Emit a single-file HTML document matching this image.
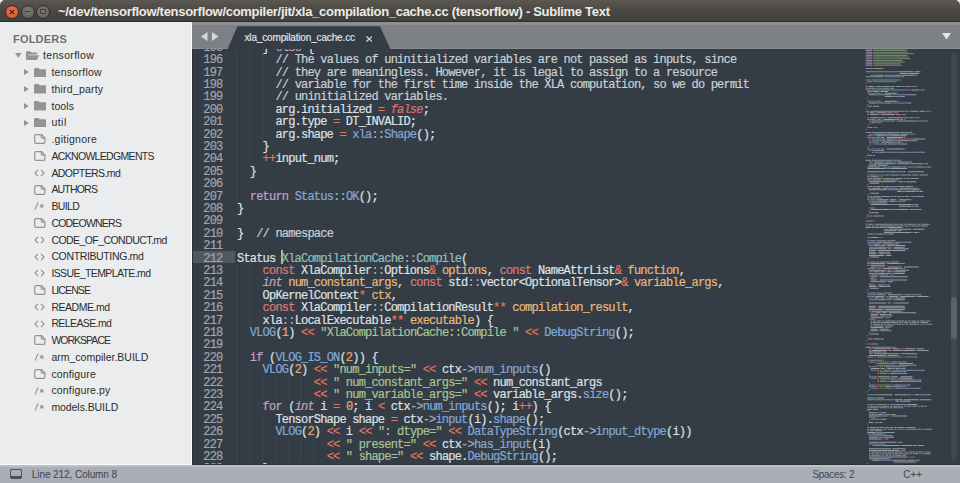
<!DOCTYPE html><html><head><meta charset="utf-8"><style>
*{margin:0;padding:0;box-sizing:border-box}
html,body{width:960px;height:483px;overflow:hidden;background:#3c3b37}
body{position:relative;font-family:"Liberation Sans", sans-serif}
.a{position:absolute;white-space:pre}
#title{left:0;top:0;width:960px;height:22px;background:linear-gradient(#5b5852,#4a4844 50%,#403f3b);}
#sidebar{left:0;top:22px;width:192px;height:443px;background:#ebecee;overflow:hidden}
#tabbar{left:192px;top:22px;width:768px;height:27px;background:#7d8084;overflow:hidden}
#code{left:192px;top:49px;width:768px;height:416px;background:#343c45;overflow:hidden}
#status{left:0;top:465px;width:960px;height:18px;background:#aaafb7}
.ln{position:absolute;left:0;width:30.5px;text-align:right;font-family:"Liberation Mono", monospace;font-size:12px;letter-spacing:-0.8px;-webkit-text-stroke:0.2px currentColor;color:#a0a6ad;line-height:12.4px;height:12.4px}
.cl{position:absolute;left:45px;font-family:"Liberation Mono", monospace;font-size:12px;letter-spacing:-0.8px;-webkit-text-stroke:0.2px currentColor;color:#dde1e6;line-height:12.4px;height:12.4px;white-space:pre}
.sb{position:absolute;font-size:10.5px;color:#2c2c2c;line-height:14px;height:14px;white-space:pre}

.d{color:#a9b0b8}.k{color:#de7a76}.s{color:#a7c593}.t{color:#82a9d6}.f{color:#82a9d6}.n{color:#e9a85f}.o{color:#e57556}
.p{color:#e8b87d}.r{color:#c7a0c8}.i{font-style:italic}.c{color:#cad0d6}.cy{color:#8fc0bd}.fl{color:#e06c70;font-style:italic}

</style></head><body>
<div id="title" class="a">
<div class="a" style="left:0;top:21px;width:960px;height:1px;background:#2e2d2a"></div>
<svg class="a" style="left:0;top:0" width="960" height="6"><path d="M0 0H5A5 5 0 0 0 0 5Z" fill="#f4f4f4"/><path d="M960 0H955A5 5 0 0 1 960 5Z" fill="#f4f4f4"/></svg>
<div class="a" style="left:5.199999999999999px;top:4.5px;width:14px;height:14px;border-radius:50%;background:radial-gradient(circle at 50% 40%,#f0734a,#d9502a);border:1px solid #2f2e2b"><svg class="a" style="left:0;top:0" width="12" height="12" viewBox="0 0 12 12"><path d="M3.8 3.8L8.2 8.2M8.2 3.8L3.8 8.2" stroke="#3a1a10" stroke-width="1.05"/></svg></div>
<div class="a" style="left:20.5px;top:4.5px;width:14px;height:14px;border-radius:50%;background:radial-gradient(circle at 50% 40%,#7a7975,#5d5c58);border:1px solid #2f2e2b"><div class="a" style="left:3.5px;top:5.4px;width:5px;height:1px;background:#3b3a36"></div></div>
<div class="a" style="left:36px;top:4.5px;width:14px;height:14px;border-radius:50%;background:radial-gradient(circle at 50% 40%,#7a7975,#5d5c58);border:1px solid #2f2e2b"><div class="a" style="left:3.3px;top:3.3px;width:5.4px;height:5.4px;border:1px solid #3b3a36;border-radius:1px"></div></div>
<div id="ttl" class="a" style="left:58px;top:4px;font-size:13px;font-weight:bold;color:#eeebe4;letter-spacing:-0.291px;line-height:15px">~/dev/tensorflow/tensorflow/compiler/jit/xla_compilation_cache.cc (tensorflow) - Sublime Text</div>
</div>
<div id="sidebar" class="a">
<div id="fld" class="a" style="left:13px;top:10px;font-size:11px;font-weight:bold;color:#707070;letter-spacing:0.206px;line-height:14px">FOLDERS</div>
<div id="sb0" class="sb" style="left:43.1px;top:26.26px;letter-spacing:0.309px">tensorflow</div>
<svg class="a" style="left:15px;top:31.00px" width="7" height="5" viewBox="0 0 7 5"><path d="M0 0H6.6L3.3 4.8Z" fill="#939393"/></svg>
<svg class="a" style="left:25px;top:28.80px" width="14.5" height="9.6" viewBox="0 0 14.5 9.6"><path d="M1 9.4V1.2Q1 .3 2 .3H5.2L6.4 1.6H11.5Q12.3 1.6 12.3 2.5V3.4H4L1 9.4Z" fill="#939393"/><path d="M3.6 4.2H14.2L11.6 9.5H1Z" fill="#939393"/></svg>
<div id="sb1" class="sb" style="left:51.4px;top:43.01px;letter-spacing:0.270px">tensorflow</div>
<svg class="a" style="left:23.8px;top:47.25px" width="5" height="6" viewBox="0 0 5 6"><path d="M0 0V6L4.8 3Z" fill="#939393"/></svg>
<svg class="a" style="left:33.6px;top:45.55px" width="12.4" height="9.5" viewBox="0 0 12.4 9.5"><path d="M0 1Q0 0 1 0H4.5L5.6 1.2H11.4Q12.4 1.2 12.4 2.2V8.5Q12.4 9.5 11.4 9.5H1Q0 9.5 0 8.5Z" fill="#939393"/></svg>
<div id="sb2" class="sb" style="left:51.4px;top:59.76px;letter-spacing:0.208px">third_party</div>
<svg class="a" style="left:23.8px;top:64.00px" width="5" height="6" viewBox="0 0 5 6"><path d="M0 0V6L4.8 3Z" fill="#939393"/></svg>
<svg class="a" style="left:33.6px;top:62.30px" width="12.4" height="9.5" viewBox="0 0 12.4 9.5"><path d="M0 1Q0 0 1 0H4.5L5.6 1.2H11.4Q12.4 1.2 12.4 2.2V8.5Q12.4 9.5 11.4 9.5H1Q0 9.5 0 8.5Z" fill="#939393"/></svg>
<div id="sb3" class="sb" style="left:51.4px;top:76.51px;letter-spacing:0.104px">tools</div>
<svg class="a" style="left:23.8px;top:80.75px" width="5" height="6" viewBox="0 0 5 6"><path d="M0 0V6L4.8 3Z" fill="#939393"/></svg>
<svg class="a" style="left:33.6px;top:79.05px" width="12.4" height="9.5" viewBox="0 0 12.4 9.5"><path d="M0 1Q0 0 1 0H4.5L5.6 1.2H11.4Q12.4 1.2 12.4 2.2V8.5Q12.4 9.5 11.4 9.5H1Q0 9.5 0 8.5Z" fill="#939393"/></svg>
<div id="sb4" class="sb" style="left:51.4px;top:93.26px;letter-spacing:0.474px">util</div>
<svg class="a" style="left:23.8px;top:97.50px" width="5" height="6" viewBox="0 0 5 6"><path d="M0 0V6L4.8 3Z" fill="#939393"/></svg>
<svg class="a" style="left:33.6px;top:95.80px" width="12.4" height="9.5" viewBox="0 0 12.4 9.5"><path d="M0 1Q0 0 1 0H4.5L5.6 1.2H11.4Q12.4 1.2 12.4 2.2V8.5Q12.4 9.5 11.4 9.5H1Q0 9.5 0 8.5Z" fill="#939393"/></svg>
<div id="sb5" class="sb" style="left:51.4px;top:110.01px;letter-spacing:0.255px">.gitignore</div>
<svg class="a" style="left:34px;top:112.25px" width="12" height="10" viewBox="0 0 12 10"><path d="M1.9 .7H7.6L10.9 3.9V8Q10.9 9.3 9.6 9.3H1.9Q.7 9.3 .7 8V2Q.7 .7 1.9 .7Z M7.3 .9V3.2Q7.3 4.2 8.3 4.2H10.8" fill="none" stroke="#939393" stroke-width="1.2"/></svg>
<div id="sb6" class="sb" style="left:51.4px;top:126.76px;letter-spacing:-0.671px">ACKNOWLEDGMENTS</div>
<svg class="a" style="left:34px;top:129.00px" width="12" height="10" viewBox="0 0 12 10"><path d="M1.9 .7H7.6L10.9 3.9V8Q10.9 9.3 9.6 9.3H1.9Q.7 9.3 .7 8V2Q.7 .7 1.9 .7Z M7.3 .9V3.2Q7.3 4.2 8.3 4.2H10.8" fill="none" stroke="#939393" stroke-width="1.2"/></svg>
<div id="sb7" class="sb" style="left:51.4px;top:143.51px;letter-spacing:-0.587px">ADOPTERS.md</div>
<svg class="a" style="left:34px;top:146.75px" width="11" height="8" viewBox="0 0 11 8"><path d="M4 .8L1 4L4 7.2M7 .8L10 4L7 7.2" fill="none" stroke="#939393" stroke-width="1.2"/></svg>
<div id="sb8" class="sb" style="left:51.4px;top:160.26px;letter-spacing:-0.806px">AUTHORS</div>
<svg class="a" style="left:34px;top:162.50px" width="12" height="10" viewBox="0 0 12 10"><path d="M1.9 .7H7.6L10.9 3.9V8Q10.9 9.3 9.6 9.3H1.9Q.7 9.3 .7 8V2Q.7 .7 1.9 .7Z M7.3 .9V3.2Q7.3 4.2 8.3 4.2H10.8" fill="none" stroke="#939393" stroke-width="1.2"/></svg>
<div id="sb9" class="sb" style="left:51.4px;top:177.01px;letter-spacing:-0.634px">BUILD</div>
<svg class="a" style="left:34px;top:180.25px" width="11" height="8" viewBox="0 0 11 8"><path d="M4.2 .5L1 7.5" fill="none" stroke="#939393" stroke-width="1.1"/><path d="M7.8 1.8V6.2M5.9 2.9L9.7 5.1M5.9 5.1L9.7 2.9" fill="none" stroke="#939393" stroke-width="1"/></svg>
<div id="sb10" class="sb" style="left:51.4px;top:193.76px;letter-spacing:-0.788px">CODEOWNERS</div>
<svg class="a" style="left:34px;top:196.00px" width="12" height="10" viewBox="0 0 12 10"><path d="M1.9 .7H7.6L10.9 3.9V8Q10.9 9.3 9.6 9.3H1.9Q.7 9.3 .7 8V2Q.7 .7 1.9 .7Z M7.3 .9V3.2Q7.3 4.2 8.3 4.2H10.8" fill="none" stroke="#939393" stroke-width="1.2"/></svg>
<div id="sb11" class="sb" style="left:51.4px;top:210.51px;letter-spacing:-0.562px">CODE_OF_CONDUCT.md</div>
<svg class="a" style="left:34px;top:213.75px" width="11" height="8" viewBox="0 0 11 8"><path d="M4 .8L1 4L4 7.2M7 .8L10 4L7 7.2" fill="none" stroke="#939393" stroke-width="1.2"/></svg>
<div id="sb12" class="sb" style="left:51.4px;top:227.26px;letter-spacing:-0.363px">CONTRIBUTING.md</div>
<svg class="a" style="left:34px;top:230.50px" width="11" height="8" viewBox="0 0 11 8"><path d="M4 .8L1 4L4 7.2M7 .8L10 4L7 7.2" fill="none" stroke="#939393" stroke-width="1.2"/></svg>
<div id="sb13" class="sb" style="left:51.4px;top:244.01px;letter-spacing:-0.620px">ISSUE_TEMPLATE.md</div>
<svg class="a" style="left:34px;top:247.25px" width="11" height="8" viewBox="0 0 11 8"><path d="M4 .8L1 4L4 7.2M7 .8L10 4L7 7.2" fill="none" stroke="#939393" stroke-width="1.2"/></svg>
<div id="sb14" class="sb" style="left:51.4px;top:260.76px;letter-spacing:-0.890px">LICENSE</div>
<svg class="a" style="left:34px;top:263.00px" width="12" height="10" viewBox="0 0 12 10"><path d="M1.9 .7H7.6L10.9 3.9V8Q10.9 9.3 9.6 9.3H1.9Q.7 9.3 .7 8V2Q.7 .7 1.9 .7Z M7.3 .9V3.2Q7.3 4.2 8.3 4.2H10.8" fill="none" stroke="#939393" stroke-width="1.2"/></svg>
<div id="sb15" class="sb" style="left:51.4px;top:277.51px;letter-spacing:-0.478px">README.md</div>
<svg class="a" style="left:34px;top:280.75px" width="11" height="8" viewBox="0 0 11 8"><path d="M4 .8L1 4L4 7.2M7 .8L10 4L7 7.2" fill="none" stroke="#939393" stroke-width="1.2"/></svg>
<div id="sb16" class="sb" style="left:51.4px;top:294.26px;letter-spacing:-0.606px">RELEASE.md</div>
<svg class="a" style="left:34px;top:297.50px" width="11" height="8" viewBox="0 0 11 8"><path d="M4 .8L1 4L4 7.2M7 .8L10 4L7 7.2" fill="none" stroke="#939393" stroke-width="1.2"/></svg>
<div id="sb17" class="sb" style="left:51.4px;top:311.01px;letter-spacing:-0.987px">WORKSPACE</div>
<svg class="a" style="left:34px;top:313.25px" width="12" height="10" viewBox="0 0 12 10"><path d="M1.9 .7H7.6L10.9 3.9V8Q10.9 9.3 9.6 9.3H1.9Q.7 9.3 .7 8V2Q.7 .7 1.9 .7Z M7.3 .9V3.2Q7.3 4.2 8.3 4.2H10.8" fill="none" stroke="#939393" stroke-width="1.2"/></svg>
<div id="sb18" class="sb" style="left:51.4px;top:327.76px;letter-spacing:0.002px">arm_compiler.BUILD</div>
<svg class="a" style="left:34px;top:331.00px" width="11" height="8" viewBox="0 0 11 8"><path d="M4.2 .5L1 7.5" fill="none" stroke="#939393" stroke-width="1.1"/><path d="M7.8 1.8V6.2M5.9 2.9L9.7 5.1M5.9 5.1L9.7 2.9" fill="none" stroke="#939393" stroke-width="1"/></svg>
<div id="sb19" class="sb" style="left:51.4px;top:344.51px;letter-spacing:0.149px">configure</div>
<svg class="a" style="left:34px;top:346.75px" width="12" height="10" viewBox="0 0 12 10"><path d="M1.9 .7H7.6L10.9 3.9V8Q10.9 9.3 9.6 9.3H1.9Q.7 9.3 .7 8V2Q.7 .7 1.9 .7Z M7.3 .9V3.2Q7.3 4.2 8.3 4.2H10.8" fill="none" stroke="#939393" stroke-width="1.2"/></svg>
<div id="sb20" class="sb" style="left:51.4px;top:361.26px;letter-spacing:0.162px">configure.py</div>
<svg class="a" style="left:34px;top:364.50px" width="11" height="8" viewBox="0 0 11 8"><path d="M4.2 .5L1 7.5" fill="none" stroke="#939393" stroke-width="1.1"/><path d="M7.8 1.8V6.2M5.9 2.9L9.7 5.1M5.9 5.1L9.7 2.9" fill="none" stroke="#939393" stroke-width="1"/></svg>
<div id="sb21" class="sb" style="left:51.4px;top:378.01px;letter-spacing:-0.072px">models.BUILD</div>
<svg class="a" style="left:34px;top:381.25px" width="11" height="8" viewBox="0 0 11 8"><path d="M4.2 .5L1 7.5" fill="none" stroke="#939393" stroke-width="1.1"/><path d="M7.8 1.8V6.2M5.9 2.9L9.7 5.1M5.9 5.1L9.7 2.9" fill="none" stroke="#939393" stroke-width="1"/></svg>
<div class="a" style="left:191px;top:0;width:1px;height:443px;background:#fbfbfb"></div>
<div class="a" style="left:0;top:442px;width:192px;height:1px;background:#fbfbfb"></div>
</div>
<div id="tabbar" class="a">
<div class="a" style="left:0;top:0;width:768px;height:2.5px;background:#8c8f93"></div>
<div class="a" style="left:0;top:25.5px;width:768px;height:1.5px;background:#898c91"></div>
<svg class="a" style="left:9px;top:9.8px" width="7" height="9" viewBox="0 0 7 9"><path d="M6.5 0V9L0 4.5Z" fill="#d4d6d9"/></svg>
<svg class="a" style="left:19.7px;top:9.8px" width="7" height="9" viewBox="0 0 7 9"><path d="M0 0V9L6.5 4.5Z" fill="#d4d6d9"/></svg>
<svg class="a" style="left:0;top:0" width="768" height="27" viewBox="0 0 768 27"><path d="M35.5 27L45.5 4.3H188L198.4 27Z" fill="#343c45"/></svg>
<div id="tab" class="a" style="left:52.5px;top:8.9px;font-size:10px;color:#e6e8ea;-webkit-text-stroke:0.15px #e6e8ea;letter-spacing:-0.150px;line-height:13px">xla_compilation_cache.cc</div>
<svg class="a" style="left:173.8px;top:13.5px" width="6.5" height="6" viewBox="0 0 6.5 6"><path d="M.5 .5L6 5.5M6 .5L.5 5.5" stroke="#d6d9dc" stroke-width="1.2"/></svg>
<svg class="a" style="left:750px;top:10.5px" width="9" height="7" viewBox="0 0 9 7"><path d="M0 0H9L4.5 6.5Z" fill="#e4e6e8"/></svg>
</div>
<div id="code" class="a">
<div class="a" style="left:0;top:0;width:1px;height:416px;background:#2c3238"></div>
<div class="a" style="left:0.5px;top:202.10px;width:42.7px;height:12.3px;background:#4f5962"></div>
<div class="ln" style="top:-7.30px">195</div>
<div class="cl" style="top:-7.30px">    } <span class="r">else</span> {</div>
<div class="ln" style="top:5.10px">196</div>
<div class="cl" style="top:5.10px">      <span class="c">// The values of uninitialized variables are not passed as inputs, since</span></div>
<div class="ln" style="top:17.50px">197</div>
<div class="cl" style="top:17.50px">      <span class="c">// they are meaningless. However, it is legal to assign to a resource</span></div>
<div class="ln" style="top:29.90px">198</div>
<div class="cl" style="top:29.90px">      <span class="c">// variable for the first time inside the XLA computation, so we do permit</span></div>
<div class="ln" style="top:42.30px">199</div>
<div class="cl" style="top:42.30px">      <span class="c">// uninitialized variables.</span></div>
<div class="ln" style="top:54.70px">200</div>
<div class="cl" style="top:54.70px">      arg.initialized <span class="o">=</span> <span class="fl">false</span>;</div>
<div class="ln" style="top:67.10px">201</div>
<div class="cl" style="top:67.10px">      arg.type <span class="o">=</span> DT_INVALID;</div>
<div class="ln" style="top:79.50px">202</div>
<div class="cl" style="top:79.50px">      arg.shape <span class="o">=</span> <span class="t">xla</span><span class="d">::</span><span class="t">Shape</span>();</div>
<div class="ln" style="top:91.90px">203</div>
<div class="cl" style="top:91.90px">    }</div>
<div class="ln" style="top:104.30px">204</div>
<div class="cl" style="top:104.30px">    <span class="o">++</span>input_num;</div>
<div class="ln" style="top:116.70px">205</div>
<div class="cl" style="top:116.70px">  }</div>
<div class="ln" style="top:129.10px">206</div>
<div class="cl" style="top:129.10px"></div>
<div class="ln" style="top:141.50px">207</div>
<div class="cl" style="top:141.50px">  <span class="r">return</span> <span class="t">Status</span><span class="d">::</span><span class="t">OK</span>();</div>
<div class="ln" style="top:153.90px">208</div>
<div class="cl" style="top:153.90px">}</div>
<div class="ln" style="top:166.30px">209</div>
<div class="cl" style="top:166.30px"></div>
<div class="ln" style="top:178.70px">210</div>
<div class="cl" style="top:178.70px">}  <span class="c">// namespace</span></div>
<div class="ln" style="top:191.10px">211</div>
<div class="cl" style="top:191.10px"></div>
<div class="ln" style="top:203.50px">212</div>
<div class="cl" style="top:203.50px">Status <span class="cy">XlaCompilationCache</span><span class="d">::</span><span class="cy">Compile</span>(</div>
<div class="ln" style="top:215.90px">213</div>
<div class="cl" style="top:215.90px">    <span class="k">const</span> XlaCompiler<span class="d">::</span>Options<span class="o">&amp;</span> <span class="p">options</span>, <span class="k">const</span> NameAttrList<span class="o">&amp;</span> <span class="p">function</span>,</div>
<div class="ln" style="top:228.30px">214</div>
<div class="cl" style="top:228.30px">    <span class="r"><span class="i">int</span></span> <span class="p">num_constant_args</span>, <span class="k">const</span> std<span class="d">::</span>vector&lt;OptionalTensor&gt;<span class="o">&amp;</span> <span class="p">variable_args</span>,</div>
<div class="ln" style="top:240.70px">215</div>
<div class="cl" style="top:240.70px">    OpKernelContext<span class="o">*</span> <span class="p">ctx</span>,</div>
<div class="ln" style="top:253.10px">216</div>
<div class="cl" style="top:253.10px">    <span class="k">const</span> XlaCompiler<span class="d">::</span>CompilationResult<span class="o">**</span> <span class="p">compilation_result</span>,</div>
<div class="ln" style="top:265.50px">217</div>
<div class="cl" style="top:265.50px">    xla<span class="d">::</span>LocalExecutable<span class="o">**</span> <span class="p">executable</span>) {</div>
<div class="ln" style="top:277.90px">218</div>
<div class="cl" style="top:277.90px">  <span class="t">VLOG</span>(<span class="n">1</span>) <span class="o">&lt;&lt;</span> <span class="s">"XlaCompilationCache::Compile "</span> <span class="o">&lt;&lt;</span> <span class="t">DebugString</span>();</div>
<div class="ln" style="top:290.30px">219</div>
<div class="cl" style="top:290.30px"></div>
<div class="ln" style="top:302.70px">220</div>
<div class="cl" style="top:302.70px">  <span class="r">if</span> (<span class="t">VLOG_IS_ON</span>(<span class="n">2</span>)) {</div>
<div class="ln" style="top:315.10px">221</div>
<div class="cl" style="top:315.10px">    <span class="t">VLOG</span>(<span class="n">2</span>) <span class="o">&lt;&lt;</span> <span class="s">"num_inputs="</span> <span class="o">&lt;&lt;</span> ctx<span class="d">-&gt;</span><span class="t">num_inputs</span>()</div>
<div class="ln" style="top:327.50px">222</div>
<div class="cl" style="top:327.50px">            <span class="o">&lt;&lt;</span> <span class="s">" num_constant_args="</span> <span class="o">&lt;&lt;</span> num_constant_args</div>
<div class="ln" style="top:339.90px">223</div>
<div class="cl" style="top:339.90px">            <span class="o">&lt;&lt;</span> <span class="s">" num_variable_args="</span> <span class="o">&lt;&lt;</span> variable_args.<span class="t">size</span>();</div>
<div class="ln" style="top:352.30px">224</div>
<div class="cl" style="top:352.30px">    <span class="r">for</span> (<span class="r"><span class="i">int</span></span> i <span class="o">=</span> <span class="n">0</span>; i <span class="o">&lt;</span> ctx<span class="d">-&gt;</span><span class="t">num_inputs</span>(); i<span class="o">++</span>) {</div>
<div class="ln" style="top:364.70px">225</div>
<div class="cl" style="top:364.70px">      TensorShape shape <span class="o">=</span> ctx<span class="d">-&gt;</span><span class="t">input</span>(i).<span class="t">shape</span>();</div>
<div class="ln" style="top:377.10px">226</div>
<div class="cl" style="top:377.10px">      <span class="t">VLOG</span>(<span class="n">2</span>) <span class="o">&lt;&lt;</span> i <span class="o">&lt;&lt;</span> <span class="s">": dtype="</span> <span class="o">&lt;&lt;</span> <span class="t">DataTypeString</span>(ctx<span class="d">-&gt;</span><span class="t">input_dtype</span>(i))</div>
<div class="ln" style="top:389.50px">227</div>
<div class="cl" style="top:389.50px">              <span class="o">&lt;&lt;</span> <span class="s">" present="</span> <span class="o">&lt;&lt;</span> ctx<span class="d">-&gt;</span><span class="t">has_input</span>(i)</div>
<div class="ln" style="top:401.90px">228</div>
<div class="cl" style="top:401.90px">              <span class="o">&lt;&lt;</span> <span class="s">" shape="</span> <span class="o">&lt;&lt;</span> shape.<span class="t">DebugString</span>();</div>
<div class="ln" style="top:414.30px">229</div>
<div class="cl" style="top:414.30px">    }</div>
<svg class="a" style="left:0;top:0" width="768" height="416"><path d="M45.0 -8.10v12.4M57.8 -8.10v12.4M45.0 4.30v12.4M57.8 4.30v12.4M70.6 4.30v12.4M45.0 16.70v12.4M57.8 16.70v12.4M70.6 16.70v12.4M45.0 29.10v12.4M57.8 29.10v12.4M70.6 29.10v12.4M45.0 41.50v12.4M57.8 41.50v12.4M70.6 41.50v12.4M45.0 53.90v12.4M57.8 53.90v12.4M70.6 53.90v12.4M45.0 66.30v12.4M57.8 66.30v12.4M70.6 66.30v12.4M45.0 78.70v12.4M57.8 78.70v12.4M70.6 78.70v12.4M45.0 91.10v12.4M57.8 91.10v12.4M45.0 103.50v12.4M57.8 103.50v12.4M45.0 115.90v12.4M45.0 128.30v12.4M45.0 140.70v12.4M45.0 215.10v12.4M57.8 215.10v12.4M45.0 227.50v12.4M57.8 227.50v12.4M45.0 239.90v12.4M57.8 239.90v12.4M45.0 252.30v12.4M57.8 252.30v12.4M45.0 264.70v12.4M57.8 264.70v12.4M45.0 277.10v12.4M45.0 289.50v12.4M45.0 301.90v12.4M45.0 314.30v12.4M57.8 314.30v12.4M45.0 326.70v12.4M57.8 326.70v12.4M70.6 326.70v12.4M83.4 326.70v12.4M96.2 326.70v12.4M109.0 326.70v12.4M45.0 339.10v12.4M57.8 339.10v12.4M70.6 339.10v12.4M83.4 339.10v12.4M96.2 339.10v12.4M109.0 339.10v12.4M45.0 351.50v12.4M57.8 351.50v12.4M45.0 363.90v12.4M57.8 363.90v12.4M70.6 363.90v12.4M45.0 376.30v12.4M57.8 376.30v12.4M70.6 376.30v12.4M45.0 388.70v12.4M57.8 388.70v12.4M70.6 388.70v12.4M83.4 388.70v12.4M96.2 388.70v12.4M109.0 388.70v12.4M121.8 388.70v12.4M45.0 401.10v12.4M57.8 401.10v12.4M70.6 401.10v12.4M83.4 401.10v12.4M96.2 401.10v12.4M109.0 401.10v12.4M121.8 401.10v12.4M45.0 413.50v12.4M57.8 413.50v12.4" stroke="#3f4851" stroke-width="1" fill="none"/></svg>
<svg class="a" style="left:0;top:0" width="768" height="416" opacity="0.72"><path d="M673.7 -0.60h6.6v1.0h-6.6zM673.7 1.04h6.6v1.0h-6.6zM673.7 2.68h6.6v1.0h-6.6zM673.7 4.32h6.6v1.0h-6.6zM673.7 5.96h6.6v1.0h-6.6zM673.7 7.60h6.6v1.0h-6.6zM673.7 9.24h6.6v1.0h-6.6zM673.7 10.88h6.6v1.0h-6.6zM673.7 12.51h6.6v1.0h-6.6zM673.7 14.15h6.6v1.0h-6.6zM673.7 15.79h6.6v1.0h-6.6zM673.7 19.07h7.5v1.0h-7.5zM673.7 30.54h5.0v1.0h-5.0zM675.4 32.18h5.0v1.0h-5.0zM673.7 40.38h5.0v1.0h-5.0zM675.4 42.02h5.0v1.0h-5.0zM675.4 43.65h2.5v1.0h-2.5zM684.5 43.65h3.3v1.0h-3.3zM675.4 51.85h2.5v1.0h-2.5zM684.5 51.85h3.3v1.0h-3.3zM675.4 56.77h5.0v1.0h-5.0zM673.7 61.68h3.3v1.0h-3.3zM675.4 63.32h1.7v1.0h-1.7zM695.3 63.32h5.0v1.0h-5.0zM675.4 64.96h1.7v1.0h-1.7zM703.6 64.96h5.0v1.0h-5.0zM675.4 68.24h1.7v1.0h-1.7zM716.9 68.24h5.0v1.0h-5.0zM675.4 69.88h2.5v1.0h-2.5zM679.5 69.88h2.5v1.0h-2.5zM677.0 71.52h1.7v1.0h-1.7zM678.7 73.16h5.0v1.0h-5.0zM675.4 78.07h5.0v1.0h-5.0zM673.7 82.99h5.0v1.0h-5.0zM675.4 86.27h5.0v1.0h-5.0zM692.8 86.27h5.0v1.0h-5.0zM675.4 87.91h2.5v1.0h-2.5zM684.5 87.91h3.3v1.0h-3.3zM702.8 89.55h2.5v1.0h-2.5zM718.5 89.55h2.5v1.0h-2.5zM702.8 91.19h2.5v1.0h-2.5zM677.0 92.82h2.5v1.0h-2.5zM681.2 92.82h2.5v1.0h-2.5zM704.4 94.46h2.5v1.0h-2.5zM675.4 99.38h2.5v1.0h-2.5zM684.5 99.38h3.3v1.0h-3.3zM675.4 105.94h5.0v1.0h-5.0zM701.9 112.49h2.5v1.0h-2.5zM675.4 127.24h2.5v1.0h-2.5zM675.4 130.52h4.1v1.0h-4.1zM675.4 138.72h4.1v1.0h-4.1zM675.4 150.19h2.5v1.0h-2.5zM677.0 153.47h1.7v1.0h-1.7zM678.7 158.38h3.3v1.0h-3.3zM675.4 166.58h5.0v1.0h-5.0zM673.7 171.50h7.5v1.0h-7.5zM692.0 178.05h2.5v1.0h-2.5zM675.4 187.89h2.5v1.0h-2.5zM675.4 194.44h4.1v1.0h-4.1zM675.4 214.11h2.5v1.0h-2.5zM675.4 215.75h2.5v1.0h-2.5zM675.4 219.03h2.5v1.0h-2.5zM679.5 219.03h2.5v1.0h-2.5zM677.0 225.58h1.7v1.0h-1.7zM678.7 228.86h3.3v1.0h-3.3zM675.4 246.89h2.5v1.0h-2.5zM679.5 246.89h2.5v1.0h-2.5zM677.0 261.64h1.7v1.0h-1.7zM678.7 269.84h3.3v1.0h-3.3zM675.4 289.50h5.0v1.0h-5.0zM677.0 300.98h2.5v1.0h-2.5zM675.4 310.81h1.7v1.0h-1.7zM677.0 317.37h2.5v1.0h-2.5zM681.2 317.37h2.5v1.0h-2.5zM677.0 327.20h2.5v1.0h-2.5zM677.0 337.04h2.5v1.0h-2.5zM681.2 337.04h2.5v1.0h-2.5zM677.0 368.18h1.7v1.0h-1.7zM685.3 369.82h2.5v1.0h-2.5zM675.4 384.57h1.7v1.0h-1.7z" fill="#c39ac4"/><path d="M681.2 -0.60h34.0v1.0h-34.0zM681.2 1.04h33.2v1.0h-33.2zM681.2 2.68h34.9v1.0h-34.9zM681.2 4.32h40.7v1.0h-40.7zM681.2 5.96h34.0v1.0h-34.0zM681.2 7.60h35.7v1.0h-35.7zM681.2 9.24h37.4v1.0h-37.4zM681.2 10.88h29.0v1.0h-29.0zM681.2 12.51h31.5v1.0h-31.5zM681.2 14.15h27.4v1.0h-27.4zM681.2 15.79h28.2v1.0h-28.2zM681.2 32.18h22.4v1.0h-22.4zM700.3 45.29h2.5v1.0h-2.5zM700.3 53.49h3.3v1.0h-3.3zM684.5 307.53h25.7v1.0h-25.7zM686.2 312.45h10.8v1.0h-10.8zM686.2 314.09h17.4v1.0h-17.4zM686.2 315.73h17.4v1.0h-17.4zM692.0 320.65h8.3v1.0h-8.3zM687.8 322.28h9.1v1.0h-9.1zM687.8 323.92h7.5v1.0h-7.5zM687.8 328.84h15.8v1.0h-15.8zM687.8 330.48h6.6v1.0h-6.6zM687.8 332.12h7.5v1.0h-7.5zM686.2 335.40h13.3v1.0h-13.3zM692.0 338.68h8.3v1.0h-8.3zM684.5 355.06h10.8v1.0h-10.8z" fill="#88a57a"/><path d="M682.0 19.07h8.3v1.0h-8.3z" fill="#e3b47a"/><path d="M691.1 19.07h0.8v1.0h-0.8zM689.5 22.35h1.7v1.0h-1.7zM706.9 22.35h0.8v1.0h-0.8zM707.7 22.35h2.5v1.0h-2.5zM710.2 22.35h1.7v1.0h-1.7zM711.9 22.35h9.1v1.0h-9.1zM722.7 22.35h5.0v1.0h-5.0zM727.7 22.35h0.8v1.0h-0.8zM707.7 23.99h8.3v1.0h-8.3zM716.9 23.99h9.1v1.0h-9.1zM726.0 23.99h0.8v1.0h-0.8zM684.5 25.63h0.8v1.0h-0.8zM685.3 25.63h5.0v1.0h-5.0zM690.3 25.63h0.8v1.0h-0.8zM691.1 25.63h0.8v1.0h-0.8zM702.8 25.63h0.8v1.0h-0.8zM703.6 25.63h2.5v1.0h-2.5zM706.1 25.63h1.7v1.0h-1.7zM711.1 25.63h0.8v1.0h-0.8zM711.9 25.63h9.1v1.0h-9.1zM721.0 25.63h0.8v1.0h-0.8zM721.8 25.63h0.8v1.0h-0.8zM723.5 25.63h0.8v1.0h-0.8zM724.3 25.63h0.8v1.0h-0.8zM689.5 27.26h1.7v1.0h-1.7zM707.7 27.26h0.8v1.0h-0.8zM708.6 27.26h0.8v1.0h-0.8zM710.2 27.26h0.8v1.0h-0.8zM711.1 27.26h0.8v1.0h-0.8zM695.3 30.54h1.7v1.0h-1.7zM706.1 30.54h0.8v1.0h-0.8zM706.9 30.54h0.8v1.0h-0.8zM708.6 30.54h0.8v1.0h-0.8zM703.6 32.18h0.8v1.0h-0.8zM673.7 33.82h0.8v1.0h-0.8zM695.3 40.38h1.7v1.0h-1.7zM713.5 40.38h0.8v1.0h-0.8zM719.4 40.38h7.5v1.0h-7.5zM728.5 40.38h2.5v1.0h-2.5zM731.0 40.38h0.8v1.0h-0.8zM732.6 40.38h0.8v1.0h-0.8zM681.2 42.02h5.0v1.0h-5.0zM688.6 42.02h2.5v1.0h-2.5zM691.1 42.02h0.8v1.0h-0.8zM692.0 42.02h3.3v1.0h-3.3zM695.3 42.02h0.8v1.0h-0.8zM678.7 43.65h0.8v1.0h-0.8zM689.5 43.65h0.8v1.0h-0.8zM692.8 43.65h2.5v1.0h-2.5zM695.3 43.65h0.8v1.0h-0.8zM696.1 43.65h7.5v1.0h-7.5zM703.6 43.65h0.8v1.0h-0.8zM705.2 43.65h0.8v1.0h-0.8zM677.0 45.29h5.8v1.0h-5.8zM682.8 45.29h1.7v1.0h-1.7zM692.0 45.29h0.8v1.0h-0.8zM693.6 45.29h5.0v1.0h-5.0zM698.6 45.29h0.8v1.0h-0.8zM702.8 45.29h0.8v1.0h-0.8zM716.0 45.29h0.8v1.0h-0.8zM716.9 45.29h0.8v1.0h-0.8zM717.7 45.29h0.8v1.0h-0.8zM718.5 45.29h4.1v1.0h-4.1zM722.7 45.29h0.8v1.0h-0.8zM723.5 45.29h0.8v1.0h-0.8zM692.8 46.93h0.8v1.0h-0.8zM693.6 46.93h0.8v1.0h-0.8zM694.5 46.93h5.0v1.0h-5.0zM699.4 46.93h0.8v1.0h-0.8zM709.4 46.93h0.8v1.0h-0.8zM710.2 46.93h0.8v1.0h-0.8zM711.1 46.93h0.8v1.0h-0.8zM711.9 46.93h0.8v1.0h-0.8zM675.4 48.57h0.8v1.0h-0.8zM678.7 51.85h0.8v1.0h-0.8zM689.5 51.85h0.8v1.0h-0.8zM692.8 51.85h2.5v1.0h-2.5zM695.3 51.85h0.8v1.0h-0.8zM696.1 51.85h8.3v1.0h-8.3zM704.4 51.85h0.8v1.0h-0.8zM706.1 51.85h0.8v1.0h-0.8zM677.0 53.49h5.8v1.0h-5.8zM682.8 53.49h1.7v1.0h-1.7zM692.0 53.49h0.8v1.0h-0.8zM693.6 53.49h5.0v1.0h-5.0zM698.6 53.49h0.8v1.0h-0.8zM703.6 53.49h0.8v1.0h-0.8zM705.2 53.49h0.8v1.0h-0.8zM706.1 53.49h0.8v1.0h-0.8zM716.0 53.49h0.8v1.0h-0.8zM716.9 53.49h0.8v1.0h-0.8zM717.7 53.49h0.8v1.0h-0.8zM718.5 53.49h0.8v1.0h-0.8zM675.4 55.13h0.8v1.0h-0.8zM681.2 56.77h5.0v1.0h-5.0zM686.2 56.77h0.8v1.0h-0.8zM673.7 58.41h0.8v1.0h-0.8zM693.6 61.68h1.7v1.0h-1.7zM702.8 61.68h1.7v1.0h-1.7zM712.7 61.68h0.8v1.0h-0.8zM718.5 61.68h7.5v1.0h-7.5zM727.7 61.68h4.1v1.0h-4.1zM731.8 61.68h0.8v1.0h-0.8zM738.4 61.68h0.8v1.0h-0.8zM677.9 63.32h0.8v1.0h-0.8zM678.7 63.32h3.3v1.0h-3.3zM685.3 63.32h4.1v1.0h-4.1zM689.5 63.32h0.8v1.0h-0.8zM690.3 63.32h3.3v1.0h-3.3zM693.6 63.32h0.8v1.0h-0.8zM705.2 63.32h0.8v1.0h-0.8zM677.9 64.96h0.8v1.0h-0.8zM678.7 64.96h7.5v1.0h-7.5zM689.5 64.96h4.1v1.0h-4.1zM693.6 64.96h0.8v1.0h-0.8zM694.5 64.96h7.5v1.0h-7.5zM701.9 64.96h0.8v1.0h-0.8zM713.5 64.96h0.8v1.0h-0.8zM677.9 68.24h0.8v1.0h-0.8zM678.7 68.24h8.3v1.0h-8.3zM687.0 68.24h0.8v1.0h-0.8zM691.1 68.24h0.8v1.0h-0.8zM692.0 68.24h0.8v1.0h-0.8zM696.1 68.24h4.1v1.0h-4.1zM700.3 68.24h0.8v1.0h-0.8zM701.1 68.24h8.3v1.0h-8.3zM709.4 68.24h0.8v1.0h-0.8zM713.5 68.24h0.8v1.0h-0.8zM714.4 68.24h0.8v1.0h-0.8zM715.2 68.24h0.8v1.0h-0.8zM726.8 68.24h0.8v1.0h-0.8zM678.7 69.88h0.8v1.0h-0.8zM682.8 69.88h0.8v1.0h-0.8zM687.0 69.88h0.8v1.0h-0.8zM688.6 69.88h0.8v1.0h-0.8zM692.0 69.88h8.3v1.0h-8.3zM700.3 69.88h0.8v1.0h-0.8zM704.4 69.88h0.8v1.0h-0.8zM705.2 69.88h0.8v1.0h-0.8zM706.1 69.88h0.8v1.0h-0.8zM709.4 69.88h0.8v1.0h-0.8zM710.2 69.88h0.8v1.0h-0.8zM711.9 69.88h0.8v1.0h-0.8zM679.5 71.52h0.8v1.0h-0.8zM680.3 71.52h8.3v1.0h-8.3zM688.6 71.52h0.8v1.0h-0.8zM689.5 71.52h0.8v1.0h-0.8zM690.3 71.52h0.8v1.0h-0.8zM691.1 71.52h0.8v1.0h-0.8zM701.1 71.52h0.8v1.0h-0.8zM701.9 71.52h0.8v1.0h-0.8zM706.1 71.52h4.1v1.0h-4.1zM710.2 71.52h0.8v1.0h-0.8zM711.1 71.52h8.3v1.0h-8.3zM719.4 71.52h0.8v1.0h-0.8zM720.2 71.52h0.8v1.0h-0.8zM721.0 71.52h0.8v1.0h-0.8zM721.8 71.52h0.8v1.0h-0.8zM731.8 71.52h0.8v1.0h-0.8zM732.6 71.52h0.8v1.0h-0.8zM733.5 71.52h0.8v1.0h-0.8zM735.1 71.52h0.8v1.0h-0.8zM688.6 73.16h0.8v1.0h-0.8zM677.0 74.80h0.8v1.0h-0.8zM675.4 76.43h0.8v1.0h-0.8zM684.5 78.07h0.8v1.0h-0.8zM673.7 79.71h0.8v1.0h-0.8zM695.3 82.99h1.7v1.0h-1.7zM704.4 82.99h1.7v1.0h-1.7zM709.4 82.99h1.7v1.0h-1.7zM717.7 82.99h0.8v1.0h-0.8zM718.5 82.99h0.8v1.0h-0.8zM719.4 82.99h0.8v1.0h-0.8zM682.0 84.63h15.8v1.0h-15.8zM697.8 84.63h1.7v1.0h-1.7zM699.4 84.63h7.5v1.0h-7.5zM708.6 84.63h7.5v1.0h-7.5zM716.0 84.63h0.8v1.0h-0.8zM722.7 84.63h0.8v1.0h-0.8zM681.2 86.27h0.8v1.0h-0.8zM684.5 86.27h2.5v1.0h-2.5zM687.0 86.27h1.7v1.0h-1.7zM688.6 86.27h3.3v1.0h-3.3zM698.6 86.27h0.8v1.0h-0.8zM699.4 86.27h0.8v1.0h-0.8zM700.3 86.27h0.8v1.0h-0.8zM701.1 86.27h7.5v1.0h-7.5zM708.6 86.27h0.8v1.0h-0.8zM709.4 86.27h3.3v1.0h-3.3zM712.7 86.27h0.8v1.0h-0.8zM713.5 86.27h0.8v1.0h-0.8zM678.7 87.91h0.8v1.0h-0.8zM689.5 87.91h2.5v1.0h-2.5zM694.5 87.91h7.5v1.0h-7.5zM701.9 87.91h0.8v1.0h-0.8zM702.8 87.91h7.5v1.0h-7.5zM710.2 87.91h0.8v1.0h-0.8zM711.9 87.91h0.8v1.0h-0.8zM677.0 89.55h0.8v1.0h-0.8zM691.1 89.55h0.8v1.0h-0.8zM692.0 89.55h0.8v1.0h-0.8zM692.8 89.55h0.8v1.0h-0.8zM694.5 89.55h2.5v1.0h-2.5zM696.9 89.55h1.7v1.0h-1.7zM698.6 89.55h3.3v1.0h-3.3zM706.1 89.55h0.8v1.0h-0.8zM706.9 89.55h0.8v1.0h-0.8zM707.7 89.55h0.8v1.0h-0.8zM721.8 89.55h0.8v1.0h-0.8zM722.7 89.55h2.5v1.0h-2.5zM725.2 89.55h0.8v1.0h-0.8zM726.0 89.55h4.1v1.0h-4.1zM730.1 89.55h0.8v1.0h-0.8zM731.0 89.55h0.8v1.0h-0.8zM731.8 89.55h0.8v1.0h-0.8zM732.6 89.55h0.8v1.0h-0.8zM677.0 91.19h0.8v1.0h-0.8zM691.1 91.19h0.8v1.0h-0.8zM692.0 91.19h0.8v1.0h-0.8zM692.8 91.19h0.8v1.0h-0.8zM694.5 91.19h2.5v1.0h-2.5zM696.9 91.19h1.7v1.0h-1.7zM698.6 91.19h3.3v1.0h-3.3zM706.1 91.19h0.8v1.0h-0.8zM706.9 91.19h0.8v1.0h-0.8zM707.7 91.19h0.8v1.0h-0.8zM708.6 91.19h2.5v1.0h-2.5zM711.1 91.19h0.8v1.0h-0.8zM711.9 91.19h5.0v1.0h-5.0zM716.9 91.19h0.8v1.0h-0.8zM721.0 91.19h0.8v1.0h-0.8zM721.8 91.19h0.8v1.0h-0.8zM722.7 91.19h0.8v1.0h-0.8zM723.5 91.19h0.8v1.0h-0.8zM724.3 91.19h0.8v1.0h-0.8zM680.3 92.82h0.8v1.0h-0.8zM684.5 92.82h2.5v1.0h-2.5zM689.5 92.82h2.5v1.0h-2.5zM692.0 92.82h0.8v1.0h-0.8zM692.8 92.82h5.0v1.0h-5.0zM697.8 92.82h0.8v1.0h-0.8zM706.1 92.82h0.8v1.0h-0.8zM706.9 92.82h0.8v1.0h-0.8zM707.7 92.82h0.8v1.0h-0.8zM709.4 92.82h0.8v1.0h-0.8zM678.7 94.46h0.8v1.0h-0.8zM692.8 94.46h0.8v1.0h-0.8zM693.6 94.46h0.8v1.0h-0.8zM694.5 94.46h0.8v1.0h-0.8zM696.1 94.46h2.5v1.0h-2.5zM698.6 94.46h1.7v1.0h-1.7zM700.3 94.46h3.3v1.0h-3.3zM707.7 94.46h0.8v1.0h-0.8zM708.6 94.46h0.8v1.0h-0.8zM709.4 94.46h0.8v1.0h-0.8zM710.2 94.46h2.5v1.0h-2.5zM712.7 94.46h0.8v1.0h-0.8zM713.5 94.46h0.8v1.0h-0.8zM714.4 94.46h0.8v1.0h-0.8zM677.0 96.10h0.8v1.0h-0.8zM675.4 97.74h0.8v1.0h-0.8zM678.7 99.38h0.8v1.0h-0.8zM689.5 99.38h2.5v1.0h-2.5zM694.5 99.38h7.5v1.0h-7.5zM701.9 99.38h0.8v1.0h-0.8zM702.8 99.38h8.3v1.0h-8.3zM711.1 99.38h0.8v1.0h-0.8zM712.7 99.38h0.8v1.0h-0.8zM677.0 101.02h0.8v1.0h-0.8zM691.1 101.02h0.8v1.0h-0.8zM680.3 102.66h0.8v1.0h-0.8zM681.2 102.66h0.8v1.0h-0.8zM687.8 102.66h0.8v1.0h-0.8zM688.6 102.66h2.5v1.0h-2.5zM691.1 102.66h0.8v1.0h-0.8zM701.1 102.66h0.8v1.0h-0.8zM701.9 102.66h0.8v1.0h-0.8zM702.8 102.66h0.8v1.0h-0.8zM706.9 102.66h0.8v1.0h-0.8zM707.7 102.66h0.8v1.0h-0.8zM708.6 102.66h0.8v1.0h-0.8zM710.2 102.66h2.5v1.0h-2.5zM712.7 102.66h0.8v1.0h-0.8zM722.7 102.66h0.8v1.0h-0.8zM723.5 102.66h0.8v1.0h-0.8zM724.3 102.66h0.8v1.0h-0.8zM728.5 102.66h0.8v1.0h-0.8zM729.3 102.66h0.8v1.0h-0.8zM730.1 102.66h0.8v1.0h-0.8zM731.0 102.66h0.8v1.0h-0.8zM731.8 102.66h0.8v1.0h-0.8zM675.4 104.30h0.8v1.0h-0.8zM681.2 105.94h0.8v1.0h-0.8zM682.0 105.94h0.8v1.0h-0.8zM673.7 107.58h0.8v1.0h-0.8zM673.7 110.85h5.0v1.0h-5.0zM695.3 110.85h1.7v1.0h-1.7zM708.6 110.85h0.8v1.0h-0.8zM682.0 112.49h10.0v1.0h-10.0zM693.6 112.49h6.6v1.0h-6.6zM700.3 112.49h0.8v1.0h-0.8zM705.2 112.49h14.1v1.0h-14.1zM719.4 112.49h0.8v1.0h-0.8zM682.0 114.13h2.5v1.0h-2.5zM684.5 114.13h1.7v1.0h-1.7zM686.2 114.13h5.0v1.0h-5.0zM692.0 114.13h11.6v1.0h-11.6zM706.1 114.13h10.8v1.0h-10.8zM716.9 114.13h0.8v1.0h-0.8zM718.5 114.13h12.4v1.0h-12.4zM732.6 114.13h2.5v1.0h-2.5zM735.1 114.13h0.8v1.0h-0.8zM677.0 115.77h7.5v1.0h-7.5zM686.2 115.77h7.5v1.0h-7.5zM693.6 115.77h0.8v1.0h-0.8zM695.3 115.77h0.8v1.0h-0.8zM675.4 117.41h7.5v1.0h-7.5zM682.8 117.41h1.7v1.0h-1.7zM684.5 117.41h3.3v1.0h-3.3zM700.3 117.41h0.8v1.0h-0.8zM701.1 117.41h6.6v1.0h-6.6zM707.7 117.41h0.8v1.0h-0.8zM711.9 117.41h0.8v1.0h-0.8zM712.7 117.41h0.8v1.0h-0.8zM713.5 117.41h0.8v1.0h-0.8zM722.7 117.41h0.8v1.0h-0.8zM724.3 117.41h6.6v1.0h-6.6zM731.0 117.41h0.8v1.0h-0.8zM735.1 117.41h0.8v1.0h-0.8zM736.0 117.41h0.8v1.0h-0.8zM736.8 117.41h0.8v1.0h-0.8zM737.6 117.41h0.8v1.0h-0.8zM738.4 117.41h0.8v1.0h-0.8zM675.4 119.05h7.5v1.0h-7.5zM682.8 119.05h1.7v1.0h-1.7zM684.5 119.05h8.3v1.0h-8.3zM692.8 119.05h0.8v1.0h-0.8zM698.6 119.05h0.8v1.0h-0.8zM699.4 119.05h14.1v1.0h-14.1zM713.5 119.05h0.8v1.0h-0.8zM714.4 119.05h0.8v1.0h-0.8zM675.4 122.33h7.5v1.0h-7.5zM682.8 122.33h1.7v1.0h-1.7zM684.5 122.33h7.5v1.0h-7.5zM692.0 122.33h0.8v1.0h-0.8zM698.6 122.33h0.8v1.0h-0.8zM699.4 122.33h2.5v1.0h-2.5zM701.9 122.33h1.7v1.0h-1.7zM711.9 122.33h0.8v1.0h-0.8zM712.7 122.33h0.8v1.0h-0.8zM716.0 122.33h14.1v1.0h-14.1zM730.1 122.33h0.8v1.0h-0.8zM731.0 122.33h0.8v1.0h-0.8zM678.7 127.24h7.5v1.0h-7.5zM689.5 127.24h0.8v1.0h-0.8zM680.3 130.52h0.8v1.0h-0.8zM681.2 130.52h7.5v1.0h-7.5zM691.1 130.52h14.1v1.0h-14.1zM705.2 130.52h0.8v1.0h-0.8zM706.9 130.52h0.8v1.0h-0.8zM677.0 132.16h7.5v1.0h-7.5zM684.5 132.16h1.7v1.0h-1.7zM686.2 132.16h8.3v1.0h-8.3zM694.5 132.16h0.8v1.0h-0.8zM695.3 132.16h7.5v1.0h-7.5zM702.8 132.16h0.8v1.0h-0.8zM706.1 132.16h2.5v1.0h-2.5zM708.6 132.16h1.7v1.0h-1.7zM714.4 132.16h0.8v1.0h-0.8zM715.2 132.16h7.5v1.0h-7.5zM722.7 132.16h0.8v1.0h-0.8zM723.5 132.16h0.8v1.0h-0.8zM678.7 133.80h7.5v1.0h-7.5zM686.2 133.80h0.8v1.0h-0.8zM675.4 135.44h0.8v1.0h-0.8zM680.3 138.72h0.8v1.0h-0.8zM681.2 138.72h7.5v1.0h-7.5zM691.1 138.72h2.5v1.0h-2.5zM693.6 138.72h1.7v1.0h-1.7zM703.6 138.72h0.8v1.0h-0.8zM704.4 138.72h0.8v1.0h-0.8zM707.7 138.72h10.8v1.0h-10.8zM718.5 138.72h0.8v1.0h-0.8zM722.7 138.72h0.8v1.0h-0.8zM723.5 138.72h0.8v1.0h-0.8zM724.3 138.72h0.8v1.0h-0.8zM726.0 138.72h0.8v1.0h-0.8zM677.0 140.36h7.5v1.0h-7.5zM684.5 140.36h1.7v1.0h-1.7zM686.2 140.36h7.5v1.0h-7.5zM693.6 140.36h0.8v1.0h-0.8zM704.4 140.36h0.8v1.0h-0.8zM705.2 140.36h2.5v1.0h-2.5zM707.7 140.36h1.7v1.0h-1.7zM718.5 140.36h0.8v1.0h-0.8zM719.4 140.36h7.5v1.0h-7.5zM726.8 140.36h0.8v1.0h-0.8zM727.7 140.36h0.8v1.0h-0.8zM705.2 141.99h2.5v1.0h-2.5zM707.7 141.99h1.7v1.0h-1.7zM713.5 141.99h0.8v1.0h-0.8zM714.4 141.99h7.5v1.0h-7.5zM721.8 141.99h0.8v1.0h-0.8zM722.7 141.99h0.8v1.0h-0.8zM727.7 141.99h0.8v1.0h-0.8zM728.5 141.99h0.8v1.0h-0.8zM729.3 141.99h0.8v1.0h-0.8zM730.1 141.99h0.8v1.0h-0.8zM678.7 143.63h7.5v1.0h-7.5zM686.2 143.63h0.8v1.0h-0.8zM675.4 145.27h0.8v1.0h-0.8zM678.7 150.19h0.8v1.0h-0.8zM684.5 150.19h11.6v1.0h-11.6zM697.8 150.19h6.6v1.0h-6.6zM706.9 150.19h10.8v1.0h-10.8zM717.7 150.19h0.8v1.0h-0.8zM719.4 150.19h0.8v1.0h-0.8zM687.0 151.83h0.8v1.0h-0.8zM687.8 151.83h7.5v1.0h-7.5zM697.8 151.83h2.5v1.0h-2.5zM700.3 151.83h1.7v1.0h-1.7zM710.2 151.83h0.8v1.0h-0.8zM711.1 151.83h0.8v1.0h-0.8zM711.9 151.83h0.8v1.0h-0.8zM712.7 151.83h0.8v1.0h-0.8zM679.5 153.47h0.8v1.0h-0.8zM680.3 153.47h6.6v1.0h-6.6zM687.0 153.47h0.8v1.0h-0.8zM687.8 153.47h5.8v1.0h-5.8zM693.6 153.47h0.8v1.0h-0.8zM695.3 153.47h0.8v1.0h-0.8zM678.7 155.11h7.5v1.0h-7.5zM686.2 155.11h1.7v1.0h-1.7zM687.8 155.11h7.5v1.0h-7.5zM695.3 155.11h0.8v1.0h-0.8zM706.1 155.11h0.8v1.0h-0.8zM706.9 155.11h6.6v1.0h-6.6zM713.5 155.11h0.8v1.0h-0.8zM714.4 155.11h4.1v1.0h-4.1zM718.5 155.11h0.8v1.0h-0.8zM723.5 155.11h0.8v1.0h-0.8zM724.3 155.11h0.8v1.0h-0.8zM725.2 155.11h0.8v1.0h-0.8zM706.9 156.75h6.6v1.0h-6.6zM713.5 156.75h0.8v1.0h-0.8zM714.4 156.75h4.1v1.0h-4.1zM718.5 156.75h0.8v1.0h-0.8zM723.5 156.75h0.8v1.0h-0.8zM724.3 156.75h0.8v1.0h-0.8zM725.2 156.75h0.8v1.0h-0.8zM726.0 156.75h0.8v1.0h-0.8zM677.0 158.38h0.8v1.0h-0.8zM682.8 158.38h0.8v1.0h-0.8zM678.7 160.02h7.5v1.0h-7.5zM686.2 160.02h1.7v1.0h-1.7zM687.8 160.02h7.5v1.0h-7.5zM695.3 160.02h0.8v1.0h-0.8zM706.1 160.02h0.8v1.0h-0.8zM706.9 160.02h8.3v1.0h-8.3zM715.2 160.02h0.8v1.0h-0.8zM726.0 160.02h0.8v1.0h-0.8zM726.8 160.02h0.8v1.0h-0.8zM727.7 160.02h0.8v1.0h-0.8zM728.5 160.02h0.8v1.0h-0.8zM677.0 161.66h0.8v1.0h-0.8zM678.7 163.30h7.5v1.0h-7.5zM686.2 163.30h0.8v1.0h-0.8zM675.4 164.94h0.8v1.0h-0.8zM681.2 166.58h5.0v1.0h-5.0zM686.2 166.58h1.7v1.0h-1.7zM689.5 166.58h0.8v1.0h-0.8zM690.3 166.58h0.8v1.0h-0.8zM691.1 166.58h0.8v1.0h-0.8zM673.7 168.22h0.8v1.0h-0.8zM682.0 171.50h0.8v1.0h-0.8zM673.7 178.05h5.0v1.0h-5.0zM691.1 178.05h0.8v1.0h-0.8zM695.3 178.05h14.1v1.0h-14.1zM709.4 178.05h0.8v1.0h-0.8zM696.9 179.69h2.5v1.0h-2.5zM699.4 179.69h1.7v1.0h-1.7zM701.1 179.69h5.0v1.0h-5.0zM706.9 179.69h11.6v1.0h-11.6zM721.0 179.69h10.8v1.0h-10.8zM731.8 179.69h0.8v1.0h-0.8zM692.0 181.33h12.4v1.0h-12.4zM706.1 181.33h2.5v1.0h-2.5zM708.6 181.33h0.8v1.0h-0.8zM692.0 182.97h2.5v1.0h-2.5zM694.5 182.97h1.7v1.0h-1.7zM696.1 182.97h5.0v1.0h-5.0zM701.9 182.97h9.1v1.0h-9.1zM711.1 182.97h1.7v1.0h-1.7zM712.7 182.97h6.6v1.0h-6.6zM721.8 182.97h3.3v1.0h-3.3zM725.2 182.97h0.8v1.0h-0.8zM726.8 182.97h0.8v1.0h-0.8zM675.4 184.61h3.3v1.0h-3.3zM678.7 184.61h1.7v1.0h-1.7zM685.3 184.61h0.8v1.0h-0.8zM686.2 184.61h2.5v1.0h-2.5zM688.6 184.61h1.7v1.0h-1.7zM698.6 184.61h0.8v1.0h-0.8zM699.4 184.61h0.8v1.0h-0.8zM700.3 184.61h0.8v1.0h-0.8zM701.1 184.61h0.8v1.0h-0.8zM678.7 187.89h7.5v1.0h-7.5zM689.5 187.89h0.8v1.0h-0.8zM685.3 192.80h0.8v1.0h-0.8zM686.2 192.80h14.1v1.0h-14.1zM703.6 192.80h2.5v1.0h-2.5zM706.1 192.80h1.7v1.0h-1.7zM716.0 192.80h0.8v1.0h-0.8zM716.9 192.80h0.8v1.0h-0.8zM717.7 192.80h0.8v1.0h-0.8zM718.5 192.80h0.8v1.0h-0.8zM680.3 194.44h0.8v1.0h-0.8zM681.2 194.44h7.5v1.0h-7.5zM691.1 194.44h14.1v1.0h-14.1zM705.2 194.44h0.8v1.0h-0.8zM706.9 194.44h0.8v1.0h-0.8zM682.0 196.08h5.0v1.0h-5.0zM688.6 196.08h4.1v1.0h-4.1zM695.3 196.08h2.5v1.0h-2.5zM697.8 196.08h1.7v1.0h-1.7zM703.6 196.08h0.8v1.0h-0.8zM704.4 196.08h7.5v1.0h-7.5zM711.9 196.08h0.8v1.0h-0.8zM712.7 196.08h0.8v1.0h-0.8zM687.0 197.72h0.8v1.0h-0.8zM687.8 197.72h4.1v1.0h-4.1zM692.0 197.72h0.8v1.0h-0.8zM696.9 197.72h0.8v1.0h-0.8zM697.8 197.72h0.8v1.0h-0.8zM701.9 197.72h9.1v1.0h-9.1zM711.1 197.72h0.8v1.0h-0.8zM711.9 197.72h0.8v1.0h-0.8zM677.0 199.36h9.1v1.0h-9.1zM686.2 199.36h1.7v1.0h-1.7zM687.8 199.36h6.6v1.0h-6.6zM696.1 199.36h2.5v1.0h-2.5zM701.1 199.36h0.8v1.0h-0.8zM702.8 199.36h3.3v1.0h-3.3zM706.1 199.36h0.8v1.0h-0.8zM706.9 199.36h0.8v1.0h-0.8zM707.7 199.36h7.5v1.0h-7.5zM715.2 199.36h0.8v1.0h-0.8zM716.0 199.36h0.8v1.0h-0.8zM677.0 201.00h2.5v1.0h-2.5zM679.5 201.00h0.8v1.0h-0.8zM680.3 201.00h3.3v1.0h-3.3zM686.2 201.00h9.1v1.0h-9.1zM695.3 201.00h1.7v1.0h-1.7zM696.9 201.00h6.6v1.0h-6.6zM703.6 201.00h1.7v1.0h-1.7zM705.2 201.00h7.5v1.0h-7.5zM712.7 201.00h0.8v1.0h-0.8zM677.0 202.64h2.5v1.0h-2.5zM679.5 202.64h0.8v1.0h-0.8zM680.3 202.64h3.3v1.0h-3.3zM686.2 202.64h4.1v1.0h-4.1zM690.3 202.64h0.8v1.0h-0.8zM695.3 202.64h0.8v1.0h-0.8zM696.1 202.64h0.8v1.0h-0.8zM696.9 202.64h0.8v1.0h-0.8zM677.0 204.28h2.5v1.0h-2.5zM679.5 204.28h0.8v1.0h-0.8zM680.3 204.28h4.1v1.0h-4.1zM687.0 204.28h4.1v1.0h-4.1zM691.1 204.28h0.8v1.0h-0.8zM696.1 204.28h0.8v1.0h-0.8zM696.9 204.28h0.8v1.0h-0.8zM697.8 204.28h0.8v1.0h-0.8zM677.0 205.92h2.5v1.0h-2.5zM679.5 205.92h0.8v1.0h-0.8zM680.3 205.92h11.6v1.0h-11.6zM694.5 205.92h4.1v1.0h-4.1zM698.6 205.92h0.8v1.0h-0.8zM678.7 207.56h7.5v1.0h-7.5zM686.2 207.56h0.8v1.0h-0.8zM675.4 209.19h0.8v1.0h-0.8zM678.7 214.11h14.1v1.0h-14.1zM695.3 214.11h10.8v1.0h-10.8zM706.1 214.11h0.8v1.0h-0.8zM710.2 214.11h0.8v1.0h-0.8zM711.1 214.11h0.8v1.0h-0.8zM711.9 214.11h0.8v1.0h-0.8zM678.7 215.75h14.1v1.0h-14.1zM678.7 217.39h2.5v1.0h-2.5zM681.2 217.39h1.7v1.0h-1.7zM691.1 217.39h0.8v1.0h-0.8zM692.0 217.39h0.8v1.0h-0.8zM695.3 217.39h14.1v1.0h-14.1zM711.9 217.39h14.1v1.0h-14.1zM726.0 217.39h0.8v1.0h-0.8zM678.7 219.03h0.8v1.0h-0.8zM682.8 219.03h0.8v1.0h-0.8zM687.0 219.03h0.8v1.0h-0.8zM688.6 219.03h0.8v1.0h-0.8zM692.0 219.03h14.1v1.0h-14.1zM706.1 219.03h0.8v1.0h-0.8zM709.4 219.03h0.8v1.0h-0.8zM710.2 219.03h0.8v1.0h-0.8zM711.9 219.03h0.8v1.0h-0.8zM677.0 220.67h9.1v1.0h-9.1zM686.2 220.67h1.7v1.0h-1.7zM687.8 220.67h6.6v1.0h-6.6zM696.1 220.67h2.5v1.0h-2.5zM701.1 220.67h0.8v1.0h-0.8zM702.8 220.67h3.3v1.0h-3.3zM706.1 220.67h0.8v1.0h-0.8zM706.9 220.67h0.8v1.0h-0.8zM707.7 220.67h7.5v1.0h-7.5zM715.2 220.67h0.8v1.0h-0.8zM716.0 220.67h0.8v1.0h-0.8zM682.0 222.31h5.0v1.0h-5.0zM688.6 222.31h4.1v1.0h-4.1zM695.3 222.31h2.5v1.0h-2.5zM697.8 222.31h1.7v1.0h-1.7zM703.6 222.31h0.8v1.0h-0.8zM704.4 222.31h7.5v1.0h-7.5zM711.9 222.31h0.8v1.0h-0.8zM712.7 222.31h0.8v1.0h-0.8zM687.0 223.94h0.8v1.0h-0.8zM687.8 223.94h4.1v1.0h-4.1zM692.0 223.94h0.8v1.0h-0.8zM696.9 223.94h0.8v1.0h-0.8zM697.8 223.94h0.8v1.0h-0.8zM701.9 223.94h9.1v1.0h-9.1zM711.1 223.94h0.8v1.0h-0.8zM711.9 223.94h0.8v1.0h-0.8zM679.5 225.58h0.8v1.0h-0.8zM680.3 225.58h4.1v1.0h-4.1zM684.5 225.58h0.8v1.0h-0.8zM694.5 225.58h0.8v1.0h-0.8zM695.3 225.58h0.8v1.0h-0.8zM699.4 225.58h0.8v1.0h-0.8zM701.1 225.58h0.8v1.0h-0.8zM678.7 227.22h2.5v1.0h-2.5zM681.2 227.22h0.8v1.0h-0.8zM682.0 227.22h3.3v1.0h-3.3zM687.8 227.22h9.1v1.0h-9.1zM696.9 227.22h1.7v1.0h-1.7zM698.6 227.22h6.6v1.0h-6.6zM705.2 227.22h1.7v1.0h-1.7zM706.9 227.22h8.3v1.0h-8.3zM715.2 227.22h0.8v1.0h-0.8zM677.0 228.86h0.8v1.0h-0.8zM682.8 228.86h0.8v1.0h-0.8zM678.7 230.50h2.5v1.0h-2.5zM681.2 230.50h0.8v1.0h-0.8zM682.0 230.50h3.3v1.0h-3.3zM687.8 230.50h9.1v1.0h-9.1zM696.9 230.50h1.7v1.0h-1.7zM698.6 230.50h6.6v1.0h-6.6zM705.2 230.50h1.7v1.0h-1.7zM706.9 230.50h7.5v1.0h-7.5zM714.4 230.50h0.8v1.0h-0.8zM678.7 232.14h2.5v1.0h-2.5zM681.2 232.14h0.8v1.0h-0.8zM682.0 232.14h11.6v1.0h-11.6zM696.1 232.14h4.1v1.0h-4.1zM700.3 232.14h0.8v1.0h-0.8zM677.0 233.78h0.8v1.0h-0.8zM677.0 235.42h2.5v1.0h-2.5zM679.5 235.42h0.8v1.0h-0.8zM680.3 235.42h3.3v1.0h-3.3zM686.2 235.42h4.1v1.0h-4.1zM690.3 235.42h0.8v1.0h-0.8zM695.3 235.42h0.8v1.0h-0.8zM696.1 235.42h0.8v1.0h-0.8zM696.9 235.42h0.8v1.0h-0.8zM677.0 237.06h2.5v1.0h-2.5zM679.5 237.06h0.8v1.0h-0.8zM680.3 237.06h4.1v1.0h-4.1zM687.0 237.06h4.1v1.0h-4.1zM691.1 237.06h0.8v1.0h-0.8zM696.1 237.06h0.8v1.0h-0.8zM696.9 237.06h0.8v1.0h-0.8zM697.8 237.06h0.8v1.0h-0.8zM678.7 238.70h7.5v1.0h-7.5zM686.2 238.70h0.8v1.0h-0.8zM675.4 240.33h0.8v1.0h-0.8zM685.3 245.25h0.8v1.0h-0.8zM686.2 245.25h7.5v1.0h-7.5zM696.1 245.25h14.1v1.0h-14.1zM713.5 245.25h2.5v1.0h-2.5zM716.0 245.25h1.7v1.0h-1.7zM726.0 245.25h0.8v1.0h-0.8zM726.8 245.25h0.8v1.0h-0.8zM727.7 245.25h0.8v1.0h-0.8zM728.5 245.25h0.8v1.0h-0.8zM678.7 246.89h0.8v1.0h-0.8zM682.8 246.89h9.1v1.0h-9.1zM695.3 246.89h0.8v1.0h-0.8zM696.9 246.89h9.1v1.0h-9.1zM708.6 246.89h14.1v1.0h-14.1zM722.7 246.89h0.8v1.0h-0.8zM726.0 246.89h9.1v1.0h-9.1zM735.1 246.89h0.8v1.0h-0.8zM736.8 246.89h0.8v1.0h-0.8zM682.0 248.53h5.0v1.0h-5.0zM688.6 248.53h4.1v1.0h-4.1zM695.3 248.53h2.5v1.0h-2.5zM697.8 248.53h1.7v1.0h-1.7zM703.6 248.53h0.8v1.0h-0.8zM704.4 248.53h7.5v1.0h-7.5zM711.9 248.53h0.8v1.0h-0.8zM712.7 248.53h0.8v1.0h-0.8zM687.0 250.17h0.8v1.0h-0.8zM687.8 250.17h4.1v1.0h-4.1zM692.0 250.17h0.8v1.0h-0.8zM696.9 250.17h0.8v1.0h-0.8zM697.8 250.17h0.8v1.0h-0.8zM701.9 250.17h9.1v1.0h-9.1zM711.1 250.17h0.8v1.0h-0.8zM711.9 250.17h0.8v1.0h-0.8zM677.0 253.45h9.1v1.0h-9.1zM686.2 253.45h1.7v1.0h-1.7zM687.8 253.45h6.6v1.0h-6.6zM696.1 253.45h2.5v1.0h-2.5zM701.1 253.45h0.8v1.0h-0.8zM702.8 253.45h3.3v1.0h-3.3zM706.1 253.45h0.8v1.0h-0.8zM706.9 253.45h0.8v1.0h-0.8zM707.7 253.45h7.5v1.0h-7.5zM715.2 253.45h0.8v1.0h-0.8zM716.0 253.45h0.8v1.0h-0.8zM677.0 256.72h2.5v1.0h-2.5zM679.5 256.72h0.8v1.0h-0.8zM680.3 256.72h3.3v1.0h-3.3zM686.2 256.72h10.8v1.0h-10.8zM696.9 256.72h0.8v1.0h-0.8zM697.8 256.72h9.1v1.0h-9.1zM706.9 256.72h0.8v1.0h-0.8zM707.7 256.72h0.8v1.0h-0.8zM708.6 256.72h3.3v1.0h-3.3zM711.9 256.72h0.8v1.0h-0.8zM677.0 258.36h2.5v1.0h-2.5zM679.5 258.36h0.8v1.0h-0.8zM680.3 258.36h3.3v1.0h-3.3zM686.2 258.36h9.1v1.0h-9.1zM695.3 258.36h1.7v1.0h-1.7zM696.9 258.36h6.6v1.0h-6.6zM703.6 258.36h1.7v1.0h-1.7zM705.2 258.36h7.5v1.0h-7.5zM712.7 258.36h0.8v1.0h-0.8zM677.0 260.00h2.5v1.0h-2.5zM679.5 260.00h0.8v1.0h-0.8zM680.3 260.00h10.8v1.0h-10.8zM693.6 260.00h9.1v1.0h-9.1zM702.8 260.00h1.7v1.0h-1.7zM704.4 260.00h7.5v1.0h-7.5zM711.9 260.00h0.8v1.0h-0.8zM679.5 261.64h0.8v1.0h-0.8zM680.3 261.64h10.8v1.0h-10.8zM691.1 261.64h0.8v1.0h-0.8zM692.0 261.64h9.1v1.0h-9.1zM701.1 261.64h0.8v1.0h-0.8zM701.9 261.64h0.8v1.0h-0.8zM702.8 261.64h5.8v1.0h-5.8zM708.6 261.64h0.8v1.0h-0.8zM710.2 261.64h0.8v1.0h-0.8zM683.7 263.28h5.0v1.0h-5.0zM690.3 263.28h4.1v1.0h-4.1zM696.9 263.28h10.8v1.0h-10.8zM707.7 263.28h0.8v1.0h-0.8zM708.6 263.28h9.1v1.0h-9.1zM717.7 263.28h0.8v1.0h-0.8zM718.5 263.28h0.8v1.0h-0.8zM719.4 263.28h4.1v1.0h-4.1zM723.5 263.28h0.8v1.0h-0.8zM678.7 264.92h2.5v1.0h-2.5zM681.2 264.92h0.8v1.0h-0.8zM682.0 264.92h3.3v1.0h-3.3zM687.8 264.92h4.1v1.0h-4.1zM692.0 264.92h0.8v1.0h-0.8zM696.9 264.92h0.8v1.0h-0.8zM697.8 264.92h0.8v1.0h-0.8zM698.6 264.92h0.8v1.0h-0.8zM678.7 266.56h2.5v1.0h-2.5zM681.2 266.56h0.8v1.0h-0.8zM682.0 266.56h4.1v1.0h-4.1zM688.6 266.56h4.1v1.0h-4.1zM692.8 266.56h0.8v1.0h-0.8zM697.8 266.56h0.8v1.0h-0.8zM698.6 266.56h0.8v1.0h-0.8zM699.4 266.56h0.8v1.0h-0.8zM678.7 268.20h2.5v1.0h-2.5zM681.2 268.20h0.8v1.0h-0.8zM682.0 268.20h9.1v1.0h-9.1zM696.9 268.20h0.8v1.0h-0.8zM677.0 269.84h0.8v1.0h-0.8zM682.8 269.84h0.8v1.0h-0.8zM678.7 278.03h2.5v1.0h-2.5zM681.2 278.03h0.8v1.0h-0.8zM682.0 278.03h9.1v1.0h-9.1zM697.8 278.03h0.8v1.0h-0.8zM678.7 279.67h2.5v1.0h-2.5zM681.2 279.67h0.8v1.0h-0.8zM682.0 279.67h3.3v1.0h-3.3zM687.8 279.67h8.3v1.0h-8.3zM696.1 279.67h0.8v1.0h-0.8zM678.7 281.31h2.5v1.0h-2.5zM681.2 281.31h0.8v1.0h-0.8zM682.0 281.31h4.1v1.0h-4.1zM688.6 281.31h2.5v1.0h-2.5zM691.1 281.31h1.7v1.0h-1.7zM696.9 281.31h0.8v1.0h-0.8zM697.8 281.31h0.8v1.0h-0.8zM698.6 281.31h0.8v1.0h-0.8zM677.0 282.95h0.8v1.0h-0.8zM678.7 284.59h7.5v1.0h-7.5zM686.2 284.59h0.8v1.0h-0.8zM675.4 286.23h0.8v1.0h-0.8zM681.2 289.50h5.0v1.0h-5.0zM686.2 289.50h1.7v1.0h-1.7zM689.5 289.50h0.8v1.0h-0.8zM690.3 289.50h0.8v1.0h-0.8zM691.1 289.50h0.8v1.0h-0.8zM673.7 291.14h0.8v1.0h-0.8zM673.7 294.42h0.8v1.0h-0.8zM673.7 297.70h5.0v1.0h-5.0zM695.3 297.70h1.7v1.0h-1.7zM702.8 297.70h0.8v1.0h-0.8zM682.0 299.34h9.1v1.0h-9.1zM691.1 299.34h1.7v1.0h-1.7zM692.8 299.34h5.8v1.0h-5.8zM700.3 299.34h5.8v1.0h-5.8zM706.1 299.34h0.8v1.0h-0.8zM712.7 299.34h10.0v1.0h-10.0zM724.3 299.34h6.6v1.0h-6.6zM731.0 299.34h0.8v1.0h-0.8zM680.3 300.98h14.1v1.0h-14.1zM694.5 300.98h0.8v1.0h-0.8zM701.1 300.98h2.5v1.0h-2.5zM703.6 300.98h1.7v1.0h-1.7zM705.2 300.98h5.0v1.0h-5.0zM711.1 300.98h11.6v1.0h-11.6zM725.2 300.98h10.8v1.0h-10.8zM736.0 300.98h0.8v1.0h-0.8zM677.0 302.62h12.4v1.0h-12.4zM691.1 302.62h2.5v1.0h-2.5zM693.6 302.62h0.8v1.0h-0.8zM682.0 304.26h9.1v1.0h-9.1zM691.1 304.26h1.7v1.0h-1.7zM692.8 304.26h14.1v1.0h-14.1zM709.4 304.26h14.9v1.0h-14.9zM724.3 304.26h0.8v1.0h-0.8zM677.0 305.89h2.5v1.0h-2.5zM679.5 305.89h1.7v1.0h-1.7zM681.2 305.89h12.4v1.0h-12.4zM696.1 305.89h8.3v1.0h-8.3zM704.4 305.89h0.8v1.0h-0.8zM706.1 305.89h0.8v1.0h-0.8zM678.7 307.53h0.8v1.0h-0.8zM680.3 307.53h0.8v1.0h-0.8zM722.7 307.53h0.8v1.0h-0.8zM723.5 307.53h0.8v1.0h-0.8zM724.3 307.53h0.8v1.0h-0.8zM677.9 310.81h0.8v1.0h-0.8zM687.0 310.81h0.8v1.0h-0.8zM688.6 310.81h0.8v1.0h-0.8zM689.5 310.81h0.8v1.0h-0.8zM691.1 310.81h0.8v1.0h-0.8zM680.3 312.45h0.8v1.0h-0.8zM682.0 312.45h0.8v1.0h-0.8zM700.3 312.45h2.5v1.0h-2.5zM702.8 312.45h1.7v1.0h-1.7zM712.7 312.45h0.8v1.0h-0.8zM713.5 312.45h0.8v1.0h-0.8zM706.9 314.09h14.1v1.0h-14.1zM706.9 315.73h10.8v1.0h-10.8zM717.7 315.73h0.8v1.0h-0.8zM721.8 315.73h0.8v1.0h-0.8zM722.7 315.73h0.8v1.0h-0.8zM723.5 315.73h0.8v1.0h-0.8zM680.3 317.37h0.8v1.0h-0.8zM684.5 317.37h0.8v1.0h-0.8zM688.6 317.37h0.8v1.0h-0.8zM690.3 317.37h0.8v1.0h-0.8zM693.6 317.37h2.5v1.0h-2.5zM696.1 317.37h1.7v1.0h-1.7zM706.1 317.37h0.8v1.0h-0.8zM706.9 317.37h0.8v1.0h-0.8zM707.7 317.37h0.8v1.0h-0.8zM709.4 317.37h0.8v1.0h-0.8zM711.9 317.37h0.8v1.0h-0.8zM713.5 317.37h0.8v1.0h-0.8zM678.7 319.01h9.1v1.0h-9.1zM688.6 319.01h4.1v1.0h-4.1zM695.3 319.01h2.5v1.0h-2.5zM697.8 319.01h1.7v1.0h-1.7zM703.6 319.01h0.8v1.0h-0.8zM704.4 319.01h0.8v1.0h-0.8zM705.2 319.01h0.8v1.0h-0.8zM706.1 319.01h0.8v1.0h-0.8zM711.1 319.01h0.8v1.0h-0.8zM711.9 319.01h0.8v1.0h-0.8zM712.7 319.01h0.8v1.0h-0.8zM682.0 320.65h0.8v1.0h-0.8zM683.7 320.65h0.8v1.0h-0.8zM687.8 320.65h0.8v1.0h-0.8zM715.2 320.65h0.8v1.0h-0.8zM716.0 320.65h2.5v1.0h-2.5zM718.5 320.65h1.7v1.0h-1.7zM729.3 320.65h0.8v1.0h-0.8zM730.1 320.65h0.8v1.0h-0.8zM731.0 320.65h0.8v1.0h-0.8zM731.8 320.65h0.8v1.0h-0.8zM700.3 322.28h2.5v1.0h-2.5zM702.8 322.28h1.7v1.0h-1.7zM711.9 322.28h0.8v1.0h-0.8zM712.7 322.28h0.8v1.0h-0.8zM713.5 322.28h0.8v1.0h-0.8zM698.6 323.92h4.1v1.0h-4.1zM702.8 323.92h0.8v1.0h-0.8zM712.7 323.92h0.8v1.0h-0.8zM713.5 323.92h0.8v1.0h-0.8zM714.4 323.92h0.8v1.0h-0.8zM677.0 325.56h0.8v1.0h-0.8zM680.3 327.20h0.8v1.0h-0.8zM686.2 327.20h11.6v1.0h-11.6zM699.4 327.20h6.6v1.0h-6.6zM708.6 327.20h10.8v1.0h-10.8zM719.4 327.20h0.8v1.0h-0.8zM721.0 327.20h0.8v1.0h-0.8zM682.0 328.84h0.8v1.0h-0.8zM683.7 328.84h0.8v1.0h-0.8zM706.9 328.84h6.6v1.0h-6.6zM713.5 328.84h0.8v1.0h-0.8zM714.4 328.84h5.8v1.0h-5.8zM709.4 330.48h0.8v1.0h-0.8zM710.2 330.48h6.6v1.0h-6.6zM716.9 330.48h0.8v1.0h-0.8zM717.7 330.48h4.1v1.0h-4.1zM721.8 330.48h0.8v1.0h-0.8zM726.8 330.48h0.8v1.0h-0.8zM727.7 330.48h0.8v1.0h-0.8zM728.5 330.48h0.8v1.0h-0.8zM698.6 332.12h6.6v1.0h-6.6zM705.2 332.12h0.8v1.0h-0.8zM706.1 332.12h4.1v1.0h-4.1zM710.2 332.12h0.8v1.0h-0.8zM715.2 332.12h0.8v1.0h-0.8zM716.0 332.12h0.8v1.0h-0.8zM716.9 332.12h0.8v1.0h-0.8zM726.8 332.12h0.8v1.0h-0.8zM727.7 332.12h0.8v1.0h-0.8zM728.5 332.12h0.8v1.0h-0.8zM677.0 333.76h0.8v1.0h-0.8zM680.3 335.40h0.8v1.0h-0.8zM682.0 335.40h0.8v1.0h-0.8zM702.8 335.40h2.5v1.0h-2.5zM705.2 335.40h1.7v1.0h-1.7zM716.0 335.40h0.8v1.0h-0.8zM716.9 335.40h0.8v1.0h-0.8zM717.7 335.40h0.8v1.0h-0.8zM680.3 337.04h0.8v1.0h-0.8zM684.5 337.04h0.8v1.0h-0.8zM688.6 337.04h0.8v1.0h-0.8zM690.3 337.04h0.8v1.0h-0.8zM693.6 337.04h2.5v1.0h-2.5zM696.1 337.04h1.7v1.0h-1.7zM706.9 337.04h0.8v1.0h-0.8zM707.7 337.04h0.8v1.0h-0.8zM708.6 337.04h0.8v1.0h-0.8zM710.2 337.04h0.8v1.0h-0.8zM712.7 337.04h0.8v1.0h-0.8zM714.4 337.04h0.8v1.0h-0.8zM682.0 338.68h0.8v1.0h-0.8zM683.7 338.68h0.8v1.0h-0.8zM687.8 338.68h0.8v1.0h-0.8zM703.6 338.68h2.5v1.0h-2.5zM706.1 338.68h1.7v1.0h-1.7zM725.2 338.68h0.8v1.0h-0.8zM726.0 338.68h0.8v1.0h-0.8zM726.8 338.68h0.8v1.0h-0.8zM727.7 338.68h0.8v1.0h-0.8zM677.0 340.31h0.8v1.0h-0.8zM675.4 341.95h0.8v1.0h-0.8zM685.3 345.23h0.8v1.0h-0.8zM686.2 345.23h14.1v1.0h-14.1zM702.8 345.23h10.8v1.0h-10.8zM713.5 345.23h0.8v1.0h-0.8zM717.7 345.23h0.8v1.0h-0.8zM718.5 345.23h0.8v1.0h-0.8zM722.7 345.23h2.5v1.0h-2.5zM725.2 345.23h1.7v1.0h-1.7zM735.1 345.23h0.8v1.0h-0.8zM736.0 345.23h0.8v1.0h-0.8zM736.8 345.23h0.8v1.0h-0.8zM737.6 345.23h0.8v1.0h-0.8zM675.4 348.51h7.5v1.0h-7.5zM683.7 348.51h7.5v1.0h-7.5zM691.1 348.51h0.8v1.0h-0.8zM690.3 350.15h0.8v1.0h-0.8zM702.8 350.15h0.8v1.0h-0.8zM703.6 350.15h6.6v1.0h-6.6zM710.2 350.15h0.8v1.0h-0.8zM711.9 350.15h14.1v1.0h-14.1zM726.0 350.15h0.8v1.0h-0.8zM727.7 350.15h10.8v1.0h-10.8zM738.4 350.15h0.8v1.0h-0.8zM703.6 351.79h2.5v1.0h-2.5zM706.1 351.79h0.8v1.0h-0.8zM708.6 351.79h7.5v1.0h-7.5zM716.0 351.79h0.8v1.0h-0.8zM716.9 351.79h0.8v1.0h-0.8zM717.7 351.79h0.8v1.0h-0.8zM678.7 355.06h0.8v1.0h-0.8zM680.3 355.06h0.8v1.0h-0.8zM715.2 355.06h0.8v1.0h-0.8zM716.0 355.06h7.5v1.0h-7.5zM723.5 355.06h0.8v1.0h-0.8zM724.3 355.06h0.8v1.0h-0.8zM675.4 359.98h4.1v1.0h-4.1zM681.2 359.98h4.1v1.0h-4.1zM685.3 359.98h0.8v1.0h-0.8zM675.4 361.62h0.8v1.0h-0.8zM677.0 363.26h8.3v1.0h-8.3zM689.5 363.26h0.8v1.0h-0.8zM690.3 363.26h2.5v1.0h-2.5zM692.8 363.26h0.8v1.0h-0.8zM693.6 363.26h0.8v1.0h-0.8zM677.0 366.54h2.5v1.0h-2.5zM679.5 366.54h1.7v1.0h-1.7zM681.2 366.54h8.3v1.0h-8.3zM690.3 366.54h4.1v1.0h-4.1zM696.9 366.54h0.8v1.0h-0.8zM700.3 366.54h5.0v1.0h-5.0zM705.2 366.54h0.8v1.0h-0.8zM706.1 366.54h7.5v1.0h-7.5zM713.5 366.54h0.8v1.0h-0.8zM714.4 366.54h0.8v1.0h-0.8zM679.5 368.18h0.8v1.0h-0.8zM681.2 368.18h0.8v1.0h-0.8zM682.0 368.18h0.8v1.0h-0.8zM683.7 368.18h0.8v1.0h-0.8zM678.7 369.82h0.8v1.0h-0.8zM679.5 369.82h0.8v1.0h-0.8zM684.5 369.82h0.8v1.0h-0.8zM688.6 369.82h4.1v1.0h-4.1zM692.8 369.82h0.8v1.0h-0.8zM693.6 369.82h0.8v1.0h-0.8zM677.0 371.45h0.8v1.0h-0.8zM677.0 373.09h4.1v1.0h-4.1zM683.7 373.09h0.8v1.0h-0.8zM684.5 373.09h0.8v1.0h-0.8zM687.8 373.09h0.8v1.0h-0.8zM688.6 373.09h0.8v1.0h-0.8zM689.5 373.09h0.8v1.0h-0.8zM675.4 374.73h0.8v1.0h-0.8zM675.4 382.93h8.3v1.0h-8.3zM692.8 382.93h0.8v1.0h-0.8zM693.6 382.93h4.1v1.0h-4.1zM697.8 382.93h1.7v1.0h-1.7zM699.4 382.93h1.7v1.0h-1.7zM701.1 382.93h0.8v1.0h-0.8zM701.9 382.93h0.8v1.0h-0.8zM677.9 384.57h0.8v1.0h-0.8zM679.5 384.57h4.1v1.0h-4.1zM683.7 384.57h1.7v1.0h-1.7zM685.3 384.57h6.6v1.0h-6.6zM692.0 384.57h0.8v1.0h-0.8zM693.6 384.57h0.8v1.0h-0.8zM677.0 387.84h9.1v1.0h-9.1zM693.6 387.84h0.8v1.0h-0.8zM694.5 387.84h5.8v1.0h-5.8zM700.3 387.84h0.8v1.0h-0.8zM701.1 387.84h0.8v1.0h-0.8zM677.0 389.48h4.1v1.0h-4.1zM681.2 389.48h1.7v1.0h-1.7zM682.8 389.48h6.6v1.0h-6.6zM695.3 389.48h0.8v1.0h-0.8zM677.0 392.76h2.5v1.0h-2.5zM679.5 392.76h1.7v1.0h-1.7zM681.2 392.76h5.0v1.0h-5.0zM687.0 392.76h9.1v1.0h-9.1zM696.1 392.76h1.7v1.0h-1.7zM697.8 392.76h6.6v1.0h-6.6zM706.1 392.76h3.3v1.0h-3.3zM709.4 392.76h0.8v1.0h-0.8zM692.0 394.40h0.8v1.0h-0.8zM692.0 396.04h0.8v1.0h-0.8zM692.8 396.04h14.1v1.0h-14.1zM706.9 396.04h0.8v1.0h-0.8zM708.6 396.04h10.8v1.0h-10.8zM719.4 396.04h0.8v1.0h-0.8zM721.0 396.04h2.5v1.0h-2.5zM723.5 396.04h0.8v1.0h-0.8zM726.0 396.04h3.3v1.0h-3.3zM729.3 396.04h0.8v1.0h-0.8zM730.1 396.04h0.8v1.0h-0.8zM731.0 396.04h0.8v1.0h-0.8zM677.0 399.32h9.1v1.0h-9.1zM686.2 399.32h1.7v1.0h-1.7zM687.8 399.32h11.6v1.0h-11.6zM700.3 399.32h12.4v1.0h-12.4zM712.7 399.32h0.8v1.0h-0.8zM677.0 400.96h12.4v1.0h-12.4zM689.5 400.96h0.8v1.0h-0.8zM690.3 400.96h16.6v1.0h-16.6zM712.7 400.96h0.8v1.0h-0.8zM677.0 407.51h12.4v1.0h-12.4zM689.5 407.51h0.8v1.0h-0.8zM690.3 407.51h24.9v1.0h-24.9zM721.8 407.51h0.8v1.0h-0.8zM677.0 409.15h4.1v1.0h-4.1zM681.2 409.15h1.7v1.0h-1.7zM682.8 409.15h14.9v1.0h-14.9zM680.3 410.79h6.6v1.0h-6.6zM687.0 410.79h0.8v1.0h-0.8zM700.3 410.79h0.8v1.0h-0.8zM701.1 410.79h12.4v1.0h-12.4zM713.5 410.79h0.8v1.0h-0.8zM715.2 410.79h6.6v1.0h-6.6zM721.8 410.79h0.8v1.0h-0.8zM723.5 410.79h3.3v1.0h-3.3zM726.8 410.79h0.8v1.0h-0.8zM701.9 412.43h4.1v1.0h-4.1zM706.1 412.43h1.7v1.0h-1.7zM707.7 412.43h14.9v1.0h-14.9zM722.7 412.43h0.8v1.0h-0.8zM723.5 412.43h0.8v1.0h-0.8zM675.4 414.07h0.8v1.0h-0.8zM676.2 415.71h14.9v1.0h-14.9zM694.5 415.71h4.1v1.0h-4.1zM698.6 415.71h1.7v1.0h-1.7zM700.3 415.71h14.9v1.0h-14.9zM715.2 415.71h0.8v1.0h-0.8z" fill="#bcc2ca"/><path d="M673.7 22.35h15.8v1.0h-15.8zM673.7 27.26h15.8v1.0h-15.8zM679.5 30.54h15.8v1.0h-15.8zM679.5 40.38h15.8v1.0h-15.8zM677.9 61.68h15.8v1.0h-15.8zM695.3 61.68h7.5v1.0h-7.5zM704.4 61.68h6.6v1.0h-6.6zM679.5 82.99h15.8v1.0h-15.8zM696.9 82.99h7.5v1.0h-7.5zM706.1 82.99h3.3v1.0h-3.3zM679.5 110.85h15.8v1.0h-15.8zM679.5 297.70h15.8v1.0h-15.8z" fill="#85bdb8"/><path d="M691.1 22.35h15.8v1.0h-15.8zM678.7 25.63h5.8v1.0h-5.8zM692.8 25.63h10.0v1.0h-10.0zM707.7 25.63h3.3v1.0h-3.3zM692.0 27.26h15.8v1.0h-15.8zM696.9 30.54h9.1v1.0h-9.1zM696.9 40.38h16.6v1.0h-16.6zM684.5 45.29h7.5v1.0h-7.5zM704.4 45.29h11.6v1.0h-11.6zM700.3 46.93h9.1v1.0h-9.1zM684.5 53.49h7.5v1.0h-7.5zM706.9 53.49h9.1v1.0h-9.1zM687.8 68.24h3.3v1.0h-3.3zM710.2 68.24h3.3v1.0h-3.3zM701.1 69.88h3.3v1.0h-3.3zM692.0 71.52h9.1v1.0h-9.1zM722.7 71.52h9.1v1.0h-9.1zM711.1 82.99h6.6v1.0h-6.6zM680.3 89.55h10.8v1.0h-10.8zM680.3 91.19h10.8v1.0h-10.8zM717.7 91.19h3.3v1.0h-3.3zM698.6 92.82h7.5v1.0h-7.5zM682.0 94.46h10.8v1.0h-10.8zM680.3 101.02h10.8v1.0h-10.8zM682.8 102.66h5.0v1.0h-5.0zM692.0 102.66h9.1v1.0h-9.1zM703.6 102.66h3.3v1.0h-3.3zM713.5 102.66h9.1v1.0h-9.1zM725.2 102.66h3.3v1.0h-3.3zM696.9 110.85h11.6v1.0h-11.6zM690.3 117.41h10.0v1.0h-10.0zM708.6 117.41h3.3v1.0h-3.3zM715.2 117.41h7.5v1.0h-7.5zM731.8 117.41h3.3v1.0h-3.3zM693.6 119.05h5.0v1.0h-5.0zM692.8 122.33h5.8v1.0h-5.8zM703.6 122.33h8.3v1.0h-8.3zM710.2 132.16h4.1v1.0h-4.1zM695.3 138.72h8.3v1.0h-8.3zM719.4 138.72h3.3v1.0h-3.3zM694.5 140.36h10.0v1.0h-10.0zM709.4 140.36h9.1v1.0h-9.1zM709.4 141.99h4.1v1.0h-4.1zM723.5 141.99h4.1v1.0h-4.1zM677.0 151.83h10.0v1.0h-10.0zM701.9 151.83h8.3v1.0h-8.3zM696.1 155.11h10.0v1.0h-10.0zM719.4 155.11h4.1v1.0h-4.1zM719.4 156.75h4.1v1.0h-4.1zM696.1 160.02h10.0v1.0h-10.0zM716.9 160.02h9.1v1.0h-9.1zM687.8 166.58h1.7v1.0h-1.7zM679.5 178.05h11.6v1.0h-11.6zM680.3 184.61h5.0v1.0h-5.0zM690.3 184.61h8.3v1.0h-8.3zM675.4 192.80h10.0v1.0h-10.0zM707.7 192.80h8.3v1.0h-8.3zM699.4 196.08h4.1v1.0h-4.1zM677.0 197.72h10.0v1.0h-10.0zM692.8 197.72h4.1v1.0h-4.1zM691.1 202.64h4.1v1.0h-4.1zM692.0 204.28h4.1v1.0h-4.1zM706.9 214.11h3.3v1.0h-3.3zM682.8 217.39h8.3v1.0h-8.3zM699.4 222.31h4.1v1.0h-4.1zM677.0 223.94h10.0v1.0h-10.0zM692.8 223.94h4.1v1.0h-4.1zM685.3 225.58h9.1v1.0h-9.1zM691.1 235.42h4.1v1.0h-4.1zM692.0 237.06h4.1v1.0h-4.1zM675.4 245.25h10.0v1.0h-10.0zM717.7 245.25h8.3v1.0h-8.3zM699.4 248.53h4.1v1.0h-4.1zM677.0 250.17h10.0v1.0h-10.0zM692.8 250.17h4.1v1.0h-4.1zM692.8 264.92h4.1v1.0h-4.1zM693.6 266.56h4.1v1.0h-4.1zM692.8 281.31h4.1v1.0h-4.1zM687.8 289.50h1.7v1.0h-1.7zM696.9 297.70h5.8v1.0h-5.8zM675.4 307.53h3.3v1.0h-3.3zM713.5 307.53h9.1v1.0h-9.1zM678.7 310.81h8.3v1.0h-8.3zM677.0 312.45h3.3v1.0h-3.3zM704.4 312.45h8.3v1.0h-8.3zM718.5 315.73h3.3v1.0h-3.3zM697.8 317.37h8.3v1.0h-8.3zM699.4 319.01h4.1v1.0h-4.1zM706.9 319.01h4.1v1.0h-4.1zM678.7 320.65h3.3v1.0h-3.3zM703.6 320.65h11.6v1.0h-11.6zM720.2 320.65h9.1v1.0h-9.1zM704.4 322.28h7.5v1.0h-7.5zM703.6 323.92h9.1v1.0h-9.1zM678.7 328.84h3.3v1.0h-3.3zM697.8 330.48h11.6v1.0h-11.6zM722.7 330.48h4.1v1.0h-4.1zM711.1 332.12h4.1v1.0h-4.1zM717.7 332.12h9.1v1.0h-9.1zM677.0 335.40h3.3v1.0h-3.3zM706.9 335.40h9.1v1.0h-9.1zM697.8 337.04h9.1v1.0h-9.1zM678.7 338.68h3.3v1.0h-3.3zM707.7 338.68h17.4v1.0h-17.4zM675.4 345.23h10.0v1.0h-10.0zM714.4 345.23h3.3v1.0h-3.3zM726.8 345.23h8.3v1.0h-8.3zM675.4 350.15h14.9v1.0h-14.9zM691.1 350.15h11.6v1.0h-11.6zM675.4 355.06h3.3v1.0h-3.3zM698.6 355.06h16.6v1.0h-16.6zM686.2 363.26h3.3v1.0h-3.3zM680.3 369.82h4.1v1.0h-4.1zM685.3 373.09h2.5v1.0h-2.5zM684.5 382.93h8.3v1.0h-8.3zM687.0 387.84h6.6v1.0h-6.6zM677.0 394.40h14.9v1.0h-14.9zM680.3 396.04h11.6v1.0h-11.6zM687.8 410.79h12.4v1.0h-12.4z" fill="#7fa6d4"/><path d="M721.0 22.35h0.8v1.0h-0.8zM726.8 40.38h0.8v1.0h-0.8zM687.0 42.02h0.8v1.0h-0.8zM687.8 43.65h0.8v1.0h-0.8zM692.8 45.29h0.8v1.0h-0.8zM687.8 51.85h0.8v1.0h-0.8zM692.8 53.49h0.8v1.0h-0.8zM711.1 61.68h1.7v1.0h-1.7zM726.0 61.68h0.8v1.0h-0.8zM682.8 63.32h1.7v1.0h-1.7zM687.0 64.96h1.7v1.0h-1.7zM693.6 68.24h1.7v1.0h-1.7zM684.5 69.88h0.8v1.0h-0.8zM690.3 69.88h0.8v1.0h-0.8zM707.7 69.88h1.7v1.0h-1.7zM703.6 71.52h1.7v1.0h-1.7zM706.9 84.63h0.8v1.0h-0.8zM682.8 86.27h0.8v1.0h-0.8zM692.0 86.27h0.8v1.0h-0.8zM697.8 86.27h0.8v1.0h-0.8zM687.8 87.91h0.8v1.0h-0.8zM678.7 89.55h0.8v1.0h-0.8zM701.9 89.55h0.8v1.0h-0.8zM705.2 89.55h0.8v1.0h-0.8zM717.7 89.55h0.8v1.0h-0.8zM721.0 89.55h0.8v1.0h-0.8zM678.7 91.19h0.8v1.0h-0.8zM701.9 91.19h0.8v1.0h-0.8zM705.2 91.19h0.8v1.0h-0.8zM680.3 94.46h0.8v1.0h-0.8zM703.6 94.46h0.8v1.0h-0.8zM706.9 94.46h0.8v1.0h-0.8zM687.8 99.38h0.8v1.0h-0.8zM678.7 101.02h0.8v1.0h-0.8zM692.0 112.49h0.8v1.0h-0.8zM691.1 114.13h0.8v1.0h-0.8zM703.6 114.13h0.8v1.0h-0.8zM704.4 114.13h0.8v1.0h-0.8zM731.0 114.13h0.8v1.0h-0.8zM684.5 115.77h0.8v1.0h-0.8zM688.6 117.41h0.8v1.0h-0.8zM723.5 117.41h0.8v1.0h-0.8zM687.0 127.24h0.8v1.0h-0.8zM689.5 130.52h0.8v1.0h-0.8zM704.4 132.16h0.8v1.0h-0.8zM677.0 133.80h1.7v1.0h-1.7zM689.5 138.72h0.8v1.0h-0.8zM677.0 143.63h1.7v1.0h-1.7zM696.1 150.19h0.8v1.0h-0.8zM696.1 151.83h0.8v1.0h-0.8zM677.0 163.30h1.7v1.0h-1.7zM706.1 179.69h0.8v1.0h-0.8zM718.5 179.69h0.8v1.0h-0.8zM719.4 179.69h0.8v1.0h-0.8zM704.4 181.33h0.8v1.0h-0.8zM701.1 182.97h0.8v1.0h-0.8zM719.4 182.97h0.8v1.0h-0.8zM720.2 182.97h0.8v1.0h-0.8zM687.0 187.89h0.8v1.0h-0.8zM701.1 192.80h1.7v1.0h-1.7zM689.5 194.44h0.8v1.0h-0.8zM687.0 196.08h0.8v1.0h-0.8zM693.6 196.08h0.8v1.0h-0.8zM699.4 197.72h1.7v1.0h-1.7zM694.5 199.36h0.8v1.0h-0.8zM699.4 199.36h0.8v1.0h-0.8zM701.9 199.36h0.8v1.0h-0.8zM684.5 201.00h0.8v1.0h-0.8zM684.5 202.64h0.8v1.0h-0.8zM685.3 204.28h0.8v1.0h-0.8zM692.8 205.92h0.8v1.0h-0.8zM677.0 207.56h1.7v1.0h-1.7zM693.6 214.11h0.8v1.0h-0.8zM693.6 215.75h0.8v1.0h-0.8zM684.5 219.03h0.8v1.0h-0.8zM690.3 219.03h0.8v1.0h-0.8zM707.7 219.03h1.7v1.0h-1.7zM694.5 220.67h0.8v1.0h-0.8zM699.4 220.67h0.8v1.0h-0.8zM701.9 220.67h0.8v1.0h-0.8zM687.0 222.31h0.8v1.0h-0.8zM693.6 222.31h0.8v1.0h-0.8zM699.4 223.94h1.7v1.0h-1.7zM696.9 225.58h0.8v1.0h-0.8zM686.2 227.22h0.8v1.0h-0.8zM686.2 230.50h0.8v1.0h-0.8zM694.5 232.14h0.8v1.0h-0.8zM684.5 235.42h0.8v1.0h-0.8zM685.3 237.06h0.8v1.0h-0.8zM677.0 238.70h1.7v1.0h-1.7zM711.1 245.25h1.7v1.0h-1.7zM692.8 246.89h0.8v1.0h-0.8zM706.9 246.89h0.8v1.0h-0.8zM724.3 246.89h1.7v1.0h-1.7zM687.0 248.53h0.8v1.0h-0.8zM693.6 248.53h0.8v1.0h-0.8zM699.4 250.17h1.7v1.0h-1.7zM694.5 253.45h0.8v1.0h-0.8zM699.4 253.45h0.8v1.0h-0.8zM701.9 253.45h0.8v1.0h-0.8zM684.5 256.72h0.8v1.0h-0.8zM684.5 258.36h0.8v1.0h-0.8zM692.0 260.00h0.8v1.0h-0.8zM688.6 263.28h0.8v1.0h-0.8zM695.3 263.28h0.8v1.0h-0.8zM686.2 264.92h0.8v1.0h-0.8zM687.0 266.56h0.8v1.0h-0.8zM692.0 268.20h0.8v1.0h-0.8zM692.0 278.03h0.8v1.0h-0.8zM686.2 279.67h0.8v1.0h-0.8zM687.0 281.31h0.8v1.0h-0.8zM677.0 284.59h1.7v1.0h-1.7zM698.6 299.34h0.8v1.0h-0.8zM722.7 299.34h0.8v1.0h-0.8zM710.2 300.98h0.8v1.0h-0.8zM722.7 300.98h0.8v1.0h-0.8zM723.5 300.98h0.8v1.0h-0.8zM689.5 302.62h0.8v1.0h-0.8zM706.9 304.26h0.8v1.0h-0.8zM707.7 304.26h0.8v1.0h-0.8zM693.6 305.89h0.8v1.0h-0.8zM694.5 305.89h0.8v1.0h-0.8zM682.0 307.53h1.7v1.0h-1.7zM711.1 307.53h1.7v1.0h-1.7zM683.7 312.45h1.7v1.0h-1.7zM697.8 312.45h1.7v1.0h-1.7zM683.7 314.09h1.7v1.0h-1.7zM704.4 314.09h1.7v1.0h-1.7zM683.7 315.73h1.7v1.0h-1.7zM704.4 315.73h1.7v1.0h-1.7zM686.2 317.37h0.8v1.0h-0.8zM692.0 317.37h0.8v1.0h-0.8zM710.2 317.37h1.7v1.0h-1.7zM693.6 319.01h0.8v1.0h-0.8zM685.3 320.65h1.7v1.0h-1.7zM689.5 320.65h1.7v1.0h-1.7zM701.1 320.65h1.7v1.0h-1.7zM685.3 322.28h1.7v1.0h-1.7zM697.8 322.28h1.7v1.0h-1.7zM685.3 323.92h1.7v1.0h-1.7zM696.1 323.92h1.7v1.0h-1.7zM697.8 327.20h0.8v1.0h-0.8zM685.3 328.84h1.7v1.0h-1.7zM704.4 328.84h1.7v1.0h-1.7zM685.3 330.48h1.7v1.0h-1.7zM695.3 330.48h1.7v1.0h-1.7zM685.3 332.12h1.7v1.0h-1.7zM696.1 332.12h1.7v1.0h-1.7zM683.7 335.40h1.7v1.0h-1.7zM700.3 335.40h1.7v1.0h-1.7zM686.2 337.04h0.8v1.0h-0.8zM692.0 337.04h0.8v1.0h-0.8zM711.1 337.04h1.7v1.0h-1.7zM685.3 338.68h1.7v1.0h-1.7zM689.5 338.68h1.7v1.0h-1.7zM701.1 338.68h1.7v1.0h-1.7zM720.2 345.23h1.7v1.0h-1.7zM707.7 351.79h0.8v1.0h-0.8zM682.0 355.06h1.7v1.0h-1.7zM696.1 355.06h1.7v1.0h-1.7zM679.5 359.98h0.8v1.0h-0.8zM689.5 366.54h0.8v1.0h-0.8zM694.5 366.54h0.8v1.0h-0.8zM695.3 366.54h0.8v1.0h-0.8zM698.6 366.54h0.8v1.0h-0.8zM680.3 368.18h0.8v1.0h-0.8zM682.0 373.09h0.8v1.0h-0.8zM678.7 384.57h0.8v1.0h-0.8zM690.3 389.48h0.8v1.0h-0.8zM686.2 392.76h0.8v1.0h-0.8zM704.4 392.76h0.8v1.0h-0.8zM725.2 396.04h0.8v1.0h-0.8zM707.7 400.96h0.8v1.0h-0.8zM716.0 407.51h0.8v1.0h-0.8zM698.6 409.15h0.8v1.0h-0.8zM701.1 412.43h0.8v1.0h-0.8zM675.4 415.71h0.8v1.0h-0.8zM692.0 415.71h0.8v1.0h-0.8zM693.6 415.71h0.8v1.0h-0.8z" fill="#d97a62"/><path d="M673.7 37.10h1.7v1.0h-1.7zM676.2 37.10h5.8v1.0h-5.8zM682.8 37.10h0.8v1.0h-0.8zM684.5 37.10h5.0v1.0h-5.0zM690.3 37.10h7.5v1.0h-7.5zM698.6 37.10h4.1v1.0h-4.1zM703.6 37.10h5.8v1.0h-5.8zM710.2 37.10h2.5v1.0h-2.5zM713.5 37.10h5.0v1.0h-5.0zM719.4 37.10h1.7v1.0h-1.7zM721.8 37.10h2.5v1.0h-2.5zM673.7 38.74h1.7v1.0h-1.7zM676.2 38.74h7.5v1.0h-7.5zM684.5 38.74h1.7v1.0h-1.7zM687.0 38.74h2.5v1.0h-2.5zM690.3 38.74h6.6v1.0h-6.6zM697.8 38.74h4.1v1.0h-4.1zM675.4 125.60h1.7v1.0h-1.7zM677.9 125.60h5.0v1.0h-5.0zM683.7 125.60h2.5v1.0h-2.5zM687.0 125.60h1.7v1.0h-1.7zM689.5 125.60h2.5v1.0h-2.5zM692.8 125.60h5.0v1.0h-5.0zM698.6 125.60h8.3v1.0h-8.3zM707.7 125.60h11.6v1.0h-11.6zM720.2 125.60h6.6v1.0h-6.6zM727.7 125.60h8.3v1.0h-8.3zM675.4 128.88h1.7v1.0h-1.7zM677.9 128.88h2.5v1.0h-2.5zM681.2 128.88h2.5v1.0h-2.5zM684.5 128.88h5.0v1.0h-5.0zM690.3 128.88h1.7v1.0h-1.7zM692.8 128.88h5.8v1.0h-5.8zM699.4 128.88h3.3v1.0h-3.3zM703.6 128.88h7.5v1.0h-7.5zM711.9 128.88h1.7v1.0h-1.7zM714.4 128.88h2.5v1.0h-2.5zM717.7 128.88h9.1v1.0h-9.1zM675.4 137.08h1.7v1.0h-1.7zM677.9 137.08h2.5v1.0h-2.5zM681.2 137.08h2.5v1.0h-2.5zM684.5 137.08h4.1v1.0h-4.1zM689.5 137.08h2.5v1.0h-2.5zM692.8 137.08h5.0v1.0h-5.0zM698.6 137.08h1.7v1.0h-1.7zM701.1 137.08h2.5v1.0h-2.5zM704.4 137.08h7.5v1.0h-7.5zM712.7 137.08h8.3v1.0h-8.3zM675.4 146.91h1.7v1.0h-1.7zM677.9 146.91h2.5v1.0h-2.5zM681.2 146.91h6.6v1.0h-6.6zM688.6 146.91h9.1v1.0h-9.1zM698.6 146.91h2.5v1.0h-2.5zM701.9 146.91h2.5v1.0h-2.5zM705.2 146.91h3.3v1.0h-3.3zM709.4 146.91h2.5v1.0h-2.5zM712.7 146.91h4.1v1.0h-4.1zM717.7 146.91h1.7v1.0h-1.7zM720.2 146.91h2.5v1.0h-2.5zM723.5 146.91h8.3v1.0h-8.3zM675.4 148.55h1.7v1.0h-1.7zM677.9 148.55h5.8v1.0h-5.8zM684.5 148.55h5.0v1.0h-5.0zM673.7 174.77h1.7v1.0h-1.7zM676.2 174.77h5.0v1.0h-5.0zM682.0 174.77h0.8v1.0h-0.8zM683.7 174.77h17.4v1.0h-17.4zM701.9 174.77h5.0v1.0h-5.0zM707.7 174.77h3.3v1.0h-3.3zM711.9 174.77h2.5v1.0h-2.5zM715.2 174.77h7.5v1.0h-7.5zM723.5 174.77h1.7v1.0h-1.7zM726.0 174.77h2.5v1.0h-2.5zM729.3 174.77h8.3v1.0h-8.3zM673.7 176.41h1.7v1.0h-1.7zM676.2 176.41h2.5v1.0h-2.5zM679.5 176.41h2.5v1.0h-2.5zM682.8 176.41h4.1v1.0h-4.1zM687.8 176.41h15.8v1.0h-15.8zM704.4 176.41h7.5v1.0h-7.5zM712.7 176.41h3.3v1.0h-3.3zM716.9 176.41h1.7v1.0h-1.7zM719.4 176.41h9.1v1.0h-9.1zM729.3 176.41h6.6v1.0h-6.6zM675.4 191.16h1.7v1.0h-1.7zM677.9 191.16h5.8v1.0h-5.8zM684.5 191.16h10.0v1.0h-10.0zM695.3 191.16h8.3v1.0h-8.3zM675.4 212.47h1.7v1.0h-1.7zM677.9 212.47h5.8v1.0h-5.8zM684.5 212.47h2.5v1.0h-2.5zM687.8 212.47h10.0v1.0h-10.0zM698.6 212.47h8.3v1.0h-8.3zM675.4 243.61h1.7v1.0h-1.7zM677.9 243.61h5.8v1.0h-5.8zM684.5 243.61h6.6v1.0h-6.6zM692.0 243.61h8.3v1.0h-8.3zM678.7 271.48h1.7v1.0h-1.7zM681.2 271.48h2.5v1.0h-2.5zM684.5 271.48h5.0v1.0h-5.0zM690.3 271.48h1.7v1.0h-1.7zM692.8 271.48h10.8v1.0h-10.8zM704.4 271.48h7.5v1.0h-7.5zM712.7 271.48h2.5v1.0h-2.5zM716.0 271.48h2.5v1.0h-2.5zM719.4 271.48h5.0v1.0h-5.0zM725.2 271.48h1.7v1.0h-1.7zM727.7 271.48h5.8v1.0h-5.8zM734.3 271.48h4.1v1.0h-4.1zM678.7 273.12h1.7v1.0h-1.7zM681.2 273.12h3.3v1.0h-3.3zM685.3 273.12h2.5v1.0h-2.5zM688.6 273.12h10.0v1.0h-10.0zM699.4 273.12h6.6v1.0h-6.6zM706.9 273.12h1.7v1.0h-1.7zM709.4 273.12h1.7v1.0h-1.7zM711.9 273.12h4.1v1.0h-4.1zM716.9 273.12h1.7v1.0h-1.7zM719.4 273.12h5.0v1.0h-5.0zM725.2 273.12h1.7v1.0h-1.7zM727.7 273.12h0.8v1.0h-0.8zM729.3 273.12h6.6v1.0h-6.6zM678.7 274.75h1.7v1.0h-1.7zM681.2 274.75h6.6v1.0h-6.6zM688.6 274.75h2.5v1.0h-2.5zM692.0 274.75h2.5v1.0h-2.5zM695.3 274.75h4.1v1.0h-4.1zM700.3 274.75h3.3v1.0h-3.3zM704.4 274.75h5.0v1.0h-5.0zM710.2 274.75h2.5v1.0h-2.5zM713.5 274.75h2.5v1.0h-2.5zM716.9 274.75h10.0v1.0h-10.0zM727.7 274.75h1.7v1.0h-1.7zM730.1 274.75h1.7v1.0h-1.7zM732.6 274.75h1.7v1.0h-1.7zM735.1 274.75h5.0v1.0h-5.0zM678.7 276.39h1.7v1.0h-1.7zM681.2 276.39h10.8v1.0h-10.8zM692.8 276.39h8.3v1.0h-8.3zM676.2 294.42h1.7v1.0h-1.7zM678.7 294.42h7.5v1.0h-7.5zM675.4 356.70h1.7v1.0h-1.7zM677.9 356.70h2.5v1.0h-2.5zM681.2 356.70h4.1v1.0h-4.1zM686.2 356.70h3.3v1.0h-3.3zM690.3 356.70h6.6v1.0h-6.6zM697.8 356.70h2.5v1.0h-2.5zM701.1 356.70h7.5v1.0h-7.5zM709.4 356.70h1.7v1.0h-1.7zM711.9 356.70h2.5v1.0h-2.5zM715.2 356.70h4.1v1.0h-4.1zM720.2 356.70h5.0v1.0h-5.0zM726.0 356.70h1.7v1.0h-1.7zM728.5 356.70h3.3v1.0h-3.3zM732.6 356.70h2.5v1.0h-2.5zM675.4 358.34h1.7v1.0h-1.7zM677.9 358.34h5.8v1.0h-5.8zM684.5 358.34h2.5v1.0h-2.5zM687.8 358.34h6.6v1.0h-6.6zM695.3 358.34h1.7v1.0h-1.7zM697.8 358.34h2.5v1.0h-2.5zM701.1 358.34h4.1v1.0h-4.1zM706.1 358.34h5.0v1.0h-5.0zM677.0 364.90h1.7v1.0h-1.7zM679.5 364.90h3.3v1.0h-3.3zM683.7 364.90h1.7v1.0h-1.7zM686.2 364.90h5.0v1.0h-5.0zM692.0 364.90h0.8v1.0h-0.8zM693.6 364.90h4.1v1.0h-4.1zM698.6 364.90h5.0v1.0h-5.0zM675.4 378.01h1.7v1.0h-1.7zM677.9 378.01h5.8v1.0h-5.8zM684.5 378.01h2.5v1.0h-2.5zM687.8 378.01h4.1v1.0h-4.1zM692.8 378.01h4.1v1.0h-4.1zM697.8 378.01h3.3v1.0h-3.3zM701.9 378.01h2.5v1.0h-2.5zM705.2 378.01h6.6v1.0h-6.6zM712.7 378.01h1.7v1.0h-1.7zM715.2 378.01h8.3v1.0h-8.3zM675.4 379.65h1.7v1.0h-1.7zM677.9 379.65h12.4v1.0h-12.4zM691.1 379.65h3.3v1.0h-3.3zM695.3 379.65h5.8v1.0h-5.8zM701.9 379.65h3.3v1.0h-3.3zM706.1 379.65h3.3v1.0h-3.3zM710.2 379.65h1.7v1.0h-1.7zM712.7 379.65h1.7v1.0h-1.7zM715.2 379.65h10.0v1.0h-10.0zM726.0 379.65h3.3v1.0h-3.3zM730.1 379.65h1.7v1.0h-1.7zM732.6 379.65h7.5v1.0h-7.5zM675.4 381.29h1.7v1.0h-1.7zM677.9 381.29h4.1v1.0h-4.1zM682.8 381.29h7.5v1.0h-7.5zM677.0 386.21h1.7v1.0h-1.7zM679.5 386.21h1.7v1.0h-1.7zM682.0 386.21h2.5v1.0h-2.5zM685.3 386.21h5.0v1.0h-5.0zM691.1 386.21h10.0v1.0h-10.0zM677.0 402.60h1.7v1.0h-1.7zM679.5 402.60h10.8v1.0h-10.8zM691.1 402.60h4.1v1.0h-4.1zM696.1 402.60h5.8v1.0h-5.8zM702.8 402.60h8.3v1.0h-8.3zM711.9 402.60h1.7v1.0h-1.7zM714.4 402.60h1.7v1.0h-1.7zM716.9 402.60h5.8v1.0h-5.8zM723.5 402.60h7.5v1.0h-7.5zM731.8 402.60h1.7v1.0h-1.7zM734.3 402.60h4.1v1.0h-4.1zM677.0 404.24h1.7v1.0h-1.7zM679.5 404.24h3.3v1.0h-3.3zM683.7 404.24h3.3v1.0h-3.3zM687.8 404.24h1.7v1.0h-1.7zM690.3 404.24h2.5v1.0h-2.5zM693.6 404.24h5.8v1.0h-5.8zM700.3 404.24h5.8v1.0h-5.8zM706.9 404.24h3.3v1.0h-3.3zM711.1 404.24h1.7v1.0h-1.7zM713.5 404.24h3.3v1.0h-3.3zM717.7 404.24h2.5v1.0h-2.5zM721.0 404.24h5.0v1.0h-5.0zM726.8 404.24h1.7v1.0h-1.7zM729.3 404.24h0.8v1.0h-0.8zM731.0 404.24h7.5v1.0h-7.5zM677.0 405.87h1.7v1.0h-1.7zM679.5 405.87h9.1v1.0h-9.1zM689.5 405.87h2.5v1.0h-2.5zM692.8 405.87h3.3v1.0h-3.3zM696.9 405.87h2.5v1.0h-2.5zM700.3 405.87h1.7v1.0h-1.7zM702.8 405.87h6.6v1.0h-6.6zM710.2 405.87h4.1v1.0h-4.1z" fill="#aab1b9"/><path d="M714.4 40.38h4.1v1.0h-4.1zM679.5 43.65h4.1v1.0h-4.1zM679.5 51.85h4.1v1.0h-4.1zM713.5 61.68h4.1v1.0h-4.1zM733.5 61.68h4.1v1.0h-4.1zM701.1 63.32h4.1v1.0h-4.1zM709.4 64.96h4.1v1.0h-4.1zM722.7 68.24h4.1v1.0h-4.1zM684.5 73.16h4.1v1.0h-4.1zM681.2 78.07h3.3v1.0h-3.3zM677.0 84.63h4.1v1.0h-4.1zM717.7 84.63h4.1v1.0h-4.1zM679.5 87.91h4.1v1.0h-4.1zM708.6 89.55h9.1v1.0h-9.1zM679.5 99.38h4.1v1.0h-4.1zM677.0 112.49h4.1v1.0h-4.1zM677.0 114.13h4.1v1.0h-4.1zM679.5 150.19h4.1v1.0h-4.1zM692.0 179.69h4.1v1.0h-4.1zM677.0 196.08h4.1v1.0h-4.1zM677.0 222.31h4.1v1.0h-4.1zM677.0 248.53h4.1v1.0h-4.1zM678.7 263.28h4.1v1.0h-4.1zM693.6 268.20h3.3v1.0h-3.3zM693.6 278.03h4.1v1.0h-4.1zM677.0 299.34h4.1v1.0h-4.1zM707.7 299.34h4.1v1.0h-4.1zM696.1 300.98h4.1v1.0h-4.1zM677.0 304.26h4.1v1.0h-4.1zM681.2 327.20h4.1v1.0h-4.1zM692.0 389.48h3.3v1.0h-3.3zM709.4 400.96h3.3v1.0h-3.3zM717.7 407.51h4.1v1.0h-4.1z" fill="#d9787a"/><path d="M686.2 69.88h0.8v1.0h-0.8zM688.6 127.24h0.8v1.0h-0.8zM688.6 187.89h0.8v1.0h-0.8zM686.2 219.03h0.8v1.0h-0.8zM698.6 225.58h0.8v1.0h-0.8zM694.5 246.89h0.8v1.0h-0.8zM679.5 307.53h0.8v1.0h-0.8zM687.8 310.81h0.8v1.0h-0.8zM681.2 312.45h0.8v1.0h-0.8zM687.8 317.37h0.8v1.0h-0.8zM682.8 320.65h0.8v1.0h-0.8zM682.8 328.84h0.8v1.0h-0.8zM681.2 335.40h0.8v1.0h-0.8zM687.8 337.04h0.8v1.0h-0.8zM682.8 338.68h0.8v1.0h-0.8zM679.5 355.06h0.8v1.0h-0.8z" fill="#e0a060"/></svg>
<div class="a" style="left:758.7px;top:3.5px;width:6.5px;height:408px;background:#3e464f;border-radius:3px"></div>
<div class="a" style="left:759.3px;top:248px;width:5.4px;height:42px;background:#59626b;border-radius:2.7px"></div>
<div class="a" style="left:89.2px;top:201.20px;width:1.6px;height:13.5px;background:#c9b08c"></div>
</div>
<div class="a" style="left:192px;top:463.8px;width:768px;height:1.2px;background:#2b3137"></div>
<div id="status" class="a">
<div class="a" style="left:0;top:0;width:960px;height:2px;background:#bcc1c8"></div>
<div class="a" style="left:9.5px;top:4px;width:12.8px;height:9.5px;border:1.3px solid #4a4e55;border-radius:2px;border-bottom-width:3px"></div>
<div id="st1" class="a" style="left:31.8px;top:2.7px;font-size:10px;color:#40444b;letter-spacing:-0.084px;line-height:14px">Line 212, Column 8</div>
<div id="st2" class="a" style="left:812.5px;top:2.8px;font-size:10px;color:#40444b;letter-spacing:-0.311px;line-height:14px">Spaces: 2</div>
<div class="a" style="left:903.2px;top:2.8px;font-size:10px;color:#40444b;line-height:14px">C++</div>
</div>
</body></html>
